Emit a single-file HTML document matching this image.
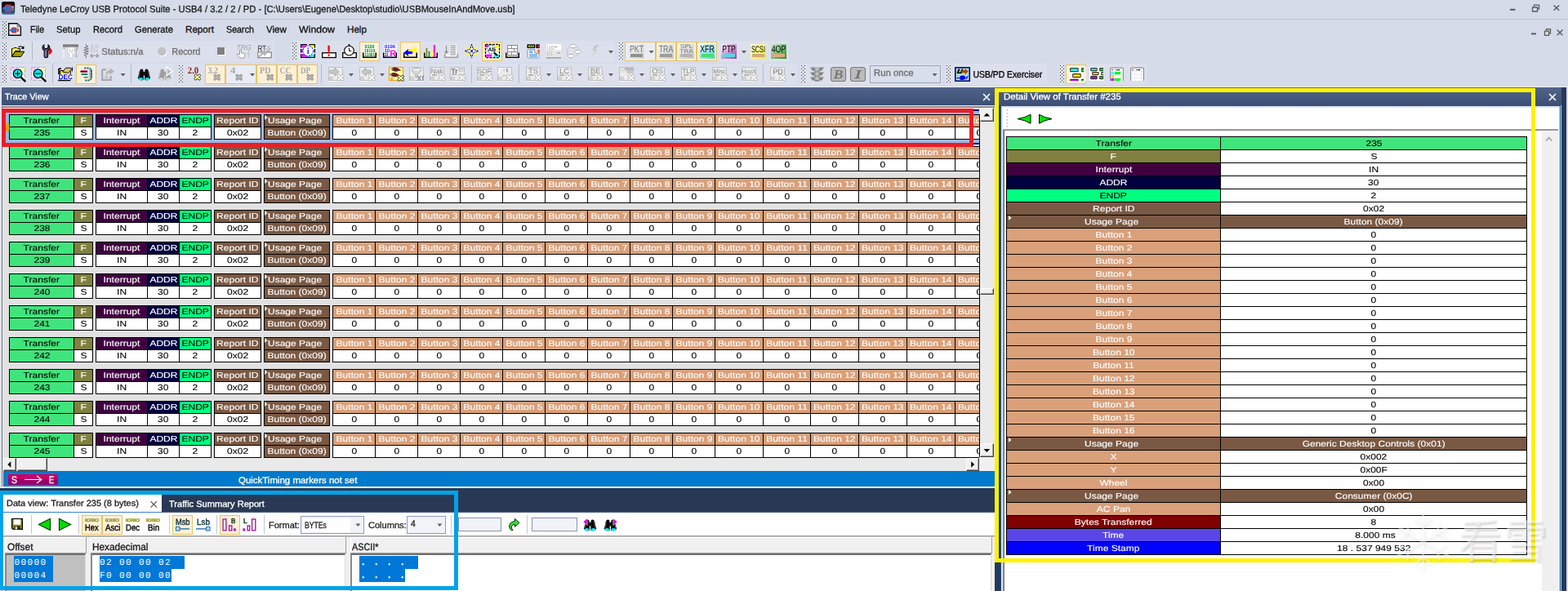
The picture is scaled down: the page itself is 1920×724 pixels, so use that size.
<!DOCTYPE html>
<html lang="en"><head><meta charset="utf-8"><title>Teledyne LeCroy USB Protocol Suite</title>
<style>
*{margin:0;padding:0;}
html,body{width:1920px;height:724px;overflow:hidden;background:#d6dbe9;}
body{position:relative;font-family:"Liberation Sans","Noto Sans CJK SC",sans-serif;text-rendering:geometricPrecision;}
div,svg{position:absolute;}
.t{white-space:pre;-webkit-text-stroke:0.3px currentColor;}
.clip{overflow:hidden;}
.rows{left:0;top:0;}
.row{left:7px;height:31px;width:1300px;}
.cell{top:0;height:31px;box-sizing:border-box;border:1px solid #000;overflow:hidden;}
.cell .h,.cell .v{left:0;right:0;height:14px;font-size:10.2px;line-height:15px;text-align:center;white-space:nowrap;}
.cell .h{top:0;}
.cell .v{top:15px;box-shadow:0 -1px 0 #000;}
.cell span,.dr span{-webkit-text-stroke:0.12px currentColor;display:inline-block;transform:scaleX(1.18);position:relative;}
.cell span.u,.dr span.u{left:-2px;}
.sb{background:#f0f0f0;box-sizing:border-box;border:1px solid;border-color:#fff #404040 #404040 #fff;box-shadow:inset -1px -1px 0 #a0a0a0;}
.dt{width:638px;height:513px;background:#000;}
.dr{left:0;width:638px;height:17px;}
.dl,.dv{top:1px;height:15px;font-size:10.2px;line-height:17px;text-align:center;white-space:nowrap;}
.dl{left:1px;width:261px;}
.dv{left:263px;width:374px;}
.wm{font-family:"Noto Sans CJK SC","Liberation Sans",sans-serif;font-size:57px;line-height:66px;color:rgba(255,255,255,.5);text-shadow:1px 2px 3px rgba(0,0,0,.18);letter-spacing:2px;font-weight:400;white-space:nowrap;transform:scaleX(0.94);transform-origin:0 0;}
</style></head>
<body>
<div class="t" style="left:25.30px;top:4px;font-size:11.63px;line-height:16px;height:16px;color:#1a1a1a;transform:scaleX(0.9661);transform-origin:0 50%;">Teledyne LeCroy USB Protocol Suite - USB4 / 3.2 / 2 / PD - [C:\Users\Eugene\Desktop\studio\USBMouseInAndMove.usb]</div>
<div style="left:0px;top:23px;width:1920px;height:1px;background:#bcc2d2;"></div>
<svg style="left:2px;top:2px;" width="17" height="17" viewBox="0 0 17 17"><defs><linearGradient id="ai" x1="0" y1="0" x2="0" y2="1"><stop offset="0" stop-color="#050505"/><stop offset="0.5" stop-color="#15202c"/><stop offset="1" stop-color="#3b74ad"/></linearGradient></defs><rect x="0" y="0" width="16.2" height="15.8" rx="2.4" fill="url(#ai)"/><path d="M1.1 7.6 L3 6.4 L5.4 3.4 H11 L12.2 5 V11.4 L11 12.9 H5.4 L3 10 L1.1 9 Z" fill="#e82a30"/><path d="M1.1 8 L3.4 7.4 L5.6 5.4 H10.6 V11.4 H5.6 L3.4 9.6 L1.1 9 Z" fill="#1878e0"/><rect x="12.3" y="5.4" width="2.6" height="2.4" fill="#d0d0d0"/><rect x="12.3" y="8.4" width="2.6" height="2.4" fill="#a8a8a8"/><rect x="12.9" y="6.4" width="1.3" height="1" fill="#444"/><rect x="12.9" y="9.2" width="1.3" height="1" fill="#444"/></svg>
<svg style="left:1846px;top:4px;" width="70" height="14" viewBox="0 0 70 14"><rect x="3" y="6.8" width="6.4" height="2" fill="#5a5a5a"/><path d="M30.5 5 h6 v5 h-6 z" fill="none" stroke="#5a5a5a" stroke-width="1.3"/><path d="M32.5 4.6 v-2.4 h6 v5 h-1.6" fill="none" stroke="#5a5a5a" stroke-width="1.3"/><path d="M56.6 2.4 l6.6 6.4 M63.2 2.4 l-6.6 6.4" stroke="#5a5a5a" stroke-width="1.4" fill="none"/></svg>
<svg style="left:0;top:24px" width="12" height="24" viewBox="0 24 12 24"><g fill="#3c3c3c"><rect x="3" y="26" width="1" height="1"/><rect x="7" y="26" width="1" height="1"/><rect x="5" y="28" width="1" height="1"/><rect x="3" y="30" width="1" height="1"/><rect x="7" y="30" width="1" height="1"/><rect x="5" y="32" width="1" height="1"/><rect x="3" y="34" width="1" height="1"/><rect x="7" y="34" width="1" height="1"/><rect x="5" y="36" width="1" height="1"/><rect x="3" y="38" width="1" height="1"/><rect x="7" y="38" width="1" height="1"/><rect x="5" y="40" width="1" height="1"/><rect x="3" y="42" width="1" height="1"/><rect x="7" y="42" width="1" height="1"/><rect x="5" y="44" width="1" height="1"/><rect x="3" y="46" width="1" height="1"/><rect x="7" y="46" width="1" height="1"/></g></svg>
<svg style="left:10px;top:28px;" width="17" height="17" viewBox="0 0 17 17"><path d="M0.7 0.7 H11 L15.4 5 V15.2 H0.7 Z" fill="#f0f0f0" stroke="#0a0a0a" stroke-width="1.4"/><path d="M11 0.9 V5 H15.2 Z" fill="#b8c0d0" stroke="#444" stroke-width="0.6"/><path d="M1.6 8.8 L3 8 L4.8 5.4 H9.4 L10.6 6.6 V11.2 L9.4 12.6 H4.8 L3 10.2 L1.6 9.6 Z" fill="#e82a30"/><path d="M1.6 9 L3.6 8.6 L5.2 7 H9.2 V11.2 H5.2 L3.6 9.8 L1.6 9.4 Z" fill="#1878e0"/><rect x="10.7" y="6.8" width="2.6" height="4.2" fill="#9a9a9a"/><rect x="11.3" y="7.6" width="1.4" height="1" fill="#333"/><rect x="11.3" y="9.4" width="1.4" height="1" fill="#555"/></svg>
<div class="t" style="left:36.50px;top:29px;font-size:11.63px;line-height:16px;height:16px;color:#111;transform:scaleX(0.9079);transform-origin:0 50%;">File</div>
<div class="t" style="left:69.00px;top:29px;font-size:11.63px;line-height:16px;height:16px;color:#111;transform:scaleX(0.9719);transform-origin:0 50%;">Setup</div>
<div class="t" style="left:114.00px;top:29px;font-size:11.63px;line-height:16px;height:16px;color:#111;transform:scaleX(0.9613);transform-origin:0 50%;">Record</div>
<div class="t" style="left:165.00px;top:29px;font-size:11.63px;line-height:16px;height:16px;color:#111;transform:scaleX(0.9691);transform-origin:0 50%;">Generate</div>
<div class="t" style="left:227.00px;top:29px;font-size:11.63px;line-height:16px;height:16px;color:#111;">Report</div>
<div class="t" style="left:277.00px;top:29px;font-size:11.63px;line-height:16px;height:16px;color:#111;transform:scaleX(0.9222);transform-origin:0 50%;">Search</div>
<div class="t" style="left:326.00px;top:29px;font-size:11.63px;line-height:16px;height:16px;color:#111;transform:scaleX(0.9952);transform-origin:0 50%;">View</div>
<div class="t" style="left:366.00px;top:29px;font-size:11.63px;line-height:16px;height:16px;color:#111;transform:scaleX(1.0627);transform-origin:0 50%;">Window</div>
<div class="t" style="left:425.00px;top:29px;font-size:11.63px;line-height:16px;height:16px;color:#111;">Help</div>
<svg style="left:1870px;top:34px;" width="46" height="12" viewBox="0 0 46 12"><rect x="5" y="6.4" width="6" height="2" fill="#5a5a5a"/><path d="M21.5 4.2 h5 v5.2 h-5 z" fill="none" stroke="#5a5a5a" stroke-width="1.3"/><path d="M23.5 3.8 v-2.2 h5 v5.2 h-1.6" fill="none" stroke="#5a5a5a" stroke-width="1.3"/><path d="M36.6 2.6 l6.8 6.6 M43.4 2.6 l-6.8 6.6" stroke="#5a5a5a" stroke-width="1.4" fill="none"/></svg>
<svg style="left:0;top:48px;will-change:transform" width="1920" height="58" viewBox="0 48 1920 58"><rect x="2" y="50" width="334.5" height="26" rx="2" fill="#dde2ee" opacity="0.75"/><rect x="356.5" y="50" width="396.5" height="26" rx="2" fill="#dde2ee" opacity="0.75"/><rect x="756" y="50" width="210" height="26" rx="2" fill="#dde2ee" opacity="0.75"/><g fill="#3c3c3c"><rect x="3" y="52" width="1" height="1"/><rect x="7" y="52" width="1" height="1"/><rect x="5" y="54" width="1" height="1"/><rect x="3" y="56" width="1" height="1"/><rect x="7" y="56" width="1" height="1"/><rect x="5" y="58" width="1" height="1"/><rect x="3" y="60" width="1" height="1"/><rect x="7" y="60" width="1" height="1"/><rect x="5" y="62" width="1" height="1"/><rect x="3" y="64" width="1" height="1"/><rect x="7" y="64" width="1" height="1"/><rect x="5" y="66" width="1" height="1"/><rect x="3" y="68" width="1" height="1"/><rect x="7" y="68" width="1" height="1"/><rect x="5" y="70" width="1" height="1"/><rect x="3" y="72" width="1" height="1"/><rect x="7" y="72" width="1" height="1"/></g><g transform="translate(14,55)"><path d="M1.2 15.2 L5.4 9.4 H16.6 L12.6 15.2 Z" fill="#fff" opacity="0.9"/><path d="M0.6 14.4 V4.6 H2 L3 3.6 H6.4 L7.4 4.6 H10.4 V7.4 H4.6 Z" fill="#ffff40" stroke="#000" stroke-width="1"/><path d="M0.6 14.4 L4.6 8.2 H15.8 L11.8 14.4 Z" fill="#a0a000" stroke="#000" stroke-width="1"/><path d="M8.6 3 Q11.4 0.2 14 3.4" fill="none" stroke="#000" stroke-width="1.1"/><path d="M15.4 1 V5 H11.6 Z" fill="#000"/></g><rect x="39.0" y="51" width="1" height="23" fill="#b3b8c6"/><g transform="translate(51,54)"><path d="M8.6 4.8 A4.4 4.4 0 0 1 8.6 13.6 Z" fill="#ff0000"/><path d="M8.6 13.8 Q12 12.6 13 9.6" stroke="#fff" stroke-width="1" fill="none"/><path d="M2.8 1 V4.2 L4.4 5.6 H6.4 L8 4.2 V1 Q10.2 2.4 9.8 5 Q9.2 7 7.6 7.8 V15.2 Q7.4 16.8 5.4 16.8 Q3.4 16.8 3.2 15.2 V7.8 Q1.6 7 1 5 Q0.6 2.4 2.8 1 Z" fill="#5c5c84" stroke="#000" stroke-width="1.1"/><path d="M4.6 8.6 V14.6" stroke="#a0a0c8" stroke-width="0.9"/></g><g transform="translate(77,54)"><rect x="0" y="0.3" width="19" height="3.4" fill="#7d7d7d"/><path d="M0 4.5 H3 V6 H0 Z M16 4.5 H19 V6 H16 Z" fill="#b8b8b8"/><path d="M6 4 H14 V12 H12 V17 H8 V12 H6 Z" fill="#fff" stroke="#c8c8c8" stroke-width="0.8"/><path d="M8.6 6 V10 H11.4 V6" fill="none" stroke="#c0c0c0" stroke-width="1"/><rect x="0" y="6" width="1.6" height="11" fill="#f0f0f0"/><path d="M16.5 6 V16 M14.6 8 L16.5 5.8 L18.4 8 M14.6 14 L16.5 16.2 L18.4 14" fill="none" stroke="#b0b0b0" stroke-width="1"/></g><g transform="translate(102,54)" fill="none"><path d="M3.5 0 V2 L6 3 L1 4.5 L6.5 6 L0.5 7.5 L6.5 9 L0.5 10.5 L6 12 L1 13.5 L3.5 14.5 V17" stroke="#787878" stroke-width="1"/><text x="8.6" y="4.8" font-family="Liberation Sans, sans-serif" font-size="6.6" fill="#b8b8b8" stroke="none" textLength="10.4" lengthAdjust="spacingAndGlyphs">3.0</text><text x="8.6" y="10.4" font-family="Liberation Sans, sans-serif" font-size="6.6" fill="#b8b8b8" stroke="none" textLength="10" lengthAdjust="spacingAndGlyphs">Rx</text><path d="M9 14.3 H18.4 M11.2 12.1 L9 14.3 L11.2 16.5 M16.2 12.1 L18.4 14.3 L16.2 16.5" stroke="#909090" stroke-width="1.1"/></g><text x="124.3" y="66.6" font-family="Liberation Sans, sans-serif" font-size="11.5" fill="#6d6d6d" stroke="#6d6d6d" stroke-width="0.3" textLength="51.4" lengthAdjust="spacingAndGlyphs">Status:n/a</text><circle cx="199.2" cy="64" r="5.2" fill="#fff"/><circle cx="198.4" cy="63" r="5.2" fill="#c2c2c2"/><text x="210.3" y="66.6" font-family="Liberation Sans, sans-serif" font-size="11.5" fill="#6d6d6d" stroke="#6d6d6d" stroke-width="0.3" textLength="35" lengthAdjust="spacingAndGlyphs">Record</text><rect x="267" y="59" width="9" height="9" fill="#fff"/><rect x="266" y="58" width="9" height="9" fill="#808080"/><g transform="translate(289,54)"><text x="0.4" y="6.8" font-family="Liberation Sans, sans-serif" font-size="8.6" font-style="italic" fill="#a4a4a4" textLength="18.4" lengthAdjust="spacingAndGlyphs">TRG</text><path d="M15.5 7 V17 M13 11.5 H15.5 M15.5 13 L17.5 11.5" stroke="#c4c4c4" stroke-width="1" fill="none"/><path d="M4.5 7.5 V13 L2 11.5 L1 12.5 L4.5 17 H10 L11 12.5 L8 11 H6.5 V7.5 Q5.5 6.5 4.5 7.5 Z" fill="#fff" stroke="#909090" stroke-width="0.9"/></g><g transform="translate(315,54)"><rect x="0.7" y="10" width="16.6" height="6.6" fill="#fff" stroke="#8a8a8a" stroke-width="1.3"/><text x="0.4" y="8.8" font-family="Liberation Sans, sans-serif" font-size="10.6" fill="#303030" textLength="10.6" lengthAdjust="spacingAndGlyphs">RT</text><path d="M2 15.5 L7 11 L9 13 L16 5" stroke="#b4b4b4" stroke-width="2" fill="none"/><path d="M8 8.5 L16 1.5" stroke="#c8c8c8" stroke-width="2" fill="none"/></g><g fill="#3c3c3c"><rect x="358" y="52" width="1" height="1"/><rect x="362" y="52" width="1" height="1"/><rect x="360" y="54" width="1" height="1"/><rect x="358" y="56" width="1" height="1"/><rect x="362" y="56" width="1" height="1"/><rect x="360" y="58" width="1" height="1"/><rect x="358" y="60" width="1" height="1"/><rect x="362" y="60" width="1" height="1"/><rect x="360" y="62" width="1" height="1"/><rect x="358" y="64" width="1" height="1"/><rect x="362" y="64" width="1" height="1"/><rect x="360" y="66" width="1" height="1"/><rect x="358" y="68" width="1" height="1"/><rect x="362" y="68" width="1" height="1"/><rect x="360" y="70" width="1" height="1"/><rect x="358" y="72" width="1" height="1"/><rect x="362" y="72" width="1" height="1"/></g><rect x="440.5" y="51.5" width="24" height="23" fill="#fdf0d4" stroke="#e5c365" stroke-width="1"/><rect x="490.5" y="51.5" width="24" height="23" fill="#fdf0d4" stroke="#e5c365" stroke-width="1"/><rect x="590.5" y="51.5" width="24" height="23" fill="#fdf0d4" stroke="#e5c365" stroke-width="1"/><g transform="translate(368,54)"><rect x="0.7" y="0.7" width="16.6" height="15.6" fill="#fff" stroke="#000" stroke-width="1.4"/><rect x="1.4" y="1.4" width="6" height="4" fill="#ff00ff"/><rect x="10.6" y="1.4" width="6" height="3" fill="#ffff00"/><rect x="1.4" y="12" width="6" height="3.6" fill="#ff00ff"/><rect x="11" y="12.6" width="5.6" height="3" fill="#00ffff"/><rect x="1.4" y="6" width="2" height="4.5" fill="#ff00ff"/><rect x="0" y="4.6" width="18" height="1.4" fill="#fff"/><rect x="0" y="10.6" width="18" height="1.4" fill="#fff"/><rect x="8" y="0" width="2" height="2" fill="#fff"/><circle cx="9.2" cy="8.4" r="6.3" fill="#fff" stroke="#0000ff" stroke-width="1" stroke-dasharray="2.2 1.2"/><rect x="8.6" y="6.8" width="1.3" height="5.4" fill="#0000ff"/><rect x="8.6" y="4.4" width="1.3" height="1.4" fill="#0000ff"/></g><rect x="394.7" y="64.7" width="16.6" height="5.8" fill="#fff" stroke="#000" stroke-width="1.3"/><path d="M401.4 55.8 h2.4 v5.5 l-0.6 4 h-1.2 l-0.6 -4 z" fill="#ff0000"/><ellipse cx="402.6" cy="67.6" rx="1.1" ry="1.4" fill="#ff0000"/><rect x="419.7" y="64.7" width="16.6" height="5.8" fill="#fff" stroke="#000" stroke-width="1.3"/><circle cx="427.5" cy="62" r="5.8" fill="#fff" stroke="#000" stroke-width="1.1"/><path d="M427.5 58.5 V62.4 H430.3" stroke="#000" stroke-width="1" fill="none"/><path d="M426.2 54.8 H428.8 M427.5 54.8 V56" stroke="#000" stroke-width="1"/><rect x="445.5" y="54" width="15" height="16" fill="#fff"/><path d="M444.75 64.5 V70.25 H460.25 V64.5" fill="none" stroke="#000" stroke-width="1.5"/><text x="452.6" y="59.3" font-family="Liberation Sans, sans-serif" font-size="6.2" font-weight="700" fill="#008000" text-anchor="middle" textLength="12" lengthAdjust="spacingAndGlyphs">0100</text><text x="452.6" y="64.3" font-family="Liberation Sans, sans-serif" font-size="6.2" font-weight="700" fill="#008000" text-anchor="middle" textLength="13" lengthAdjust="spacingAndGlyphs">10110</text><text x="452.6" y="69.3" font-family="Liberation Sans, sans-serif" font-size="6.2" font-weight="700" fill="#008000" text-anchor="middle" textLength="13" lengthAdjust="spacingAndGlyphs">11001</text><rect x="470.5" y="54" width="15" height="16" fill="#fff"/><path d="M469.75 64.5 V70.25 H485.25 V64.5" fill="none" stroke="#000" stroke-width="1.5"/><text x="471" y="59.3" font-family="Liberation Sans, sans-serif" font-size="6.2" font-weight="700" fill="#0000ff" textLength="13" lengthAdjust="spacingAndGlyphs">0100</text><text x="471" y="64.3" font-family="Liberation Sans, sans-serif" font-size="6.2" font-weight="700" fill="#0000ff" textLength="6" lengthAdjust="spacingAndGlyphs">10</text><text x="471" y="69.3" font-family="Liberation Sans, sans-serif" font-size="6.2" font-weight="700" fill="#0000ff" textLength="5" lengthAdjust="spacingAndGlyphs">11</text><text x="477.3" y="69.4" font-family="Liberation Sans, sans-serif" font-size="11" font-weight="700" fill="#ff00ff">R</text><path d="M494.75 64.5 V70.25 H510.25 V64.5" fill="#fdeccc" stroke="#000" stroke-width="1.5"/><path d="M500.5 60 H506 V56.5 L511.5 61 L506 65.5 V62.5 H500.5 Z" fill="#ffff00"/><path d="M505 63 H500 V60 L494.5 64.5 L500 69 V66 H505 Z" fill="#0000ff"/><path d="M519.75 64.5 V70.25 H535.25 V64.5" fill="#fff" stroke="#000" stroke-width="1.5"/><rect x="521.6" y="59" width="1.8" height="11" fill="#808000"/><rect x="524.6" y="63" width="1.8" height="7" fill="#008080"/><rect x="527.6" y="60" width="2" height="10" fill="#ffff00"/><rect x="530.8" y="55" width="2" height="15" fill="#ff00ff"/><path d="M544.75 66 V70.25 H560.25 V66" fill="#f4f4f4" stroke="#9a9a9a" stroke-width="1.5"/><rect x="550.5" y="54.5" width="8.5" height="14.5" fill="#fff"/><rect x="551.3" y="55.3" width="6.8" height="1.3" fill="#a0a0a0"/><rect x="551.3" y="57.5" width="6.8" height="1.3" fill="#a0a0a0"/><rect x="551.3" y="59.699999999999996" width="6.8" height="1.3" fill="#a0a0a0"/><rect x="551.3" y="61.9" width="6.8" height="1.3" fill="#a0a0a0"/><rect x="551.3" y="64.1" width="6.8" height="1.3" fill="#a0a0a0"/><rect x="551.3" y="66.3" width="6.8" height="1.3" fill="#a0a0a0"/><path d="M546.5 56 V65 M544.6 62.6 L546.5 65.2 L548.4 62.6" stroke="#8c8c8c" stroke-width="1.1" fill="none"/><g transform="translate(569,54)"><path d="M1.5 2.5 L6 5 L4 8 Z M15.5 2.5 L11 5 L13 8 Z M1.5 14.5 L6 12 L4 9 Z M15.5 14.5 L11 12 L13 9 Z" fill="#ffff00"/><path d="M8.5 0.3 L10.4 6.4 L16.8 8.5 L10.4 10.6 L8.5 16.7 L6.6 10.6 L0.2 8.5 L6.6 6.4 Z" fill="#fff" stroke="#000" stroke-width="1" stroke-dasharray="2 0.8"/><rect x="7.3" y="7.3" width="2.6" height="2.6" fill="#0000ff"/></g><g transform="translate(594,54)"><rect x="0.5" y="0.5" width="17" height="16" fill="#fff" stroke="#000" stroke-width="1.3" stroke-dasharray="3 1.2"/><rect x="1.2" y="1.2" width="4" height="3" fill="#ff00ff"/><rect x="12" y="1.2" width="5" height="4" fill="#ffff00"/><rect x="1.2" y="12.5" width="7" height="3" fill="#ff00ff"/><rect x="11" y="12.5" width="6" height="3" fill="#00ffff"/><rect x="11.5" y="7" width="5.5" height="3" fill="#ffe8b0"/><circle cx="7.4" cy="6.6" r="5" fill="#fff" stroke="#008080" stroke-width="1" stroke-dasharray="2 1"/><text x="3.4" y="9.3" font-family="Liberation Sans, sans-serif" font-size="7" font-weight="700" fill="#000">Ab</text><path d="M11 10.5 L15 14" stroke="#000" stroke-width="2.2"/></g><path d="M619.75 64.5 V70.25 H635.25 V64.5" fill="#fff" stroke="#000" stroke-width="1.5"/><g fill="none" stroke="#8c8c8c" stroke-width="1"><rect x="621.5" y="55.5" width="12" height="12" fill="#fff"/><path d="M621.5 59.5 H633.5 M621.5 63.5 H633.5 M626.5 55.5 V59.5 M629.5 59.5 V63.5 M626.5 63.5 V67.5"/><path d="M621.5 68 l1.5 1.3 l1.5 -1.3 l1.5 1.3 l1.5 -1.3 l1.5 1.3 l1.5 -1.3 l1.5 1.3 l1.5 -1.3" stroke="#b0b0b0"/></g><g transform="translate(645,54)"><rect x="0.5" y="0.3" width="9.8" height="4.6" fill="#000"/><rect x="2" y="1.6" width="6.8" height="2" fill="#c8f000"/><rect x="4" y="2.2" width="1" height="0.9" fill="#000"/><rect x="6" y="2.2" width="1" height="0.9" fill="#000"/><rect x="11.4" y="0.3" width="4.2" height="4.6" fill="#000"/><rect x="13" y="1.4" width="1.8" height="2.4" fill="#ff2050"/><path d="M2.5 6.5 H9.5 V9 Q9.5 11.5 12 11.5 H15 V15.5 Q15 17 13.5 17 H2.5 Q1 17 1 15.5 V8 Q1 6.5 2.5 6.5 Z" fill="#fff" stroke="#8888c8" stroke-width="1"/><path d="M3 8.6 H7.4 M3 10.6 H7.4 M3 13 H13 M3 15 H13" stroke="#2080d0" stroke-width="1"/><path d="M14.6 5.6 L15.3 8 L16.6 8.7 L15.3 9.4 L14.6 12.4 L13.9 9.4 L12.6 8.7 L13.9 8 Z" fill="#ff4000"/></g><g transform="translate(669,54)"><rect x="0" y="0" width="18" height="7.5" fill="#fff"/><rect x="0" y="7.5" width="18" height="8.5" fill="#e6e6e6"/><rect x="0" y="16" width="18" height="1.6" fill="#a0a0a0"/><text x="0.8" y="6.8" font-family="Liberation Sans, sans-serif" font-size="7.5" fill="#a8a8a8" textLength="8.5" lengthAdjust="spacingAndGlyphs">U0</text><text x="0.8" y="14.4" font-family="Liberation Sans, sans-serif" font-size="7.5" fill="#b0b0b0" textLength="7" lengthAdjust="spacingAndGlyphs">U1</text><rect x="9.8" y="2.6" width="3.4" height="1.6" fill="#b4b4b4"/><rect x="13" y="10" width="4" height="1.8" fill="#b0b0b0"/></g><g transform="translate(694,54)" stroke="#a8a8a8" stroke-width="0.9" fill="#fff"><path d="M0.8 6.5 L2.5 4.5 M0.8 6.5 V13 L2 14.5" fill="none" stroke="#b8b8b8"/><path d="M3.5 2.6 L5.5 0.6 H9.8 L11.8 2.6 L9.8 4.6 H5.5 Z"/><path d="M9.5 9.4 L11.5 7.4 H15.8 L17.8 9.4 L15.8 11.4 H11.5 Z"/><path d="M1 14.6 L3 12.6 H7.3 L9.3 14.6 L7.3 16.6 H3 Z"/><path d="M12.5 3.2 L14.8 5.6 M13.8 12.6 L11 14.8" stroke="#d0d0d0" stroke-width="1.6" fill="none"/></g><path d="M733.8 55 L728.2 55.6 L725.2 62 L729.2 61.6 L723.6 70.6 L731.6 60.4 L728.2 60.4 Z" fill="#c4c4c4"/><path d="M745 62 h6 l-3 3.4 z" fill="#5e5e5e"/><g fill="#3c3c3c"><rect x="758" y="52" width="1" height="1"/><rect x="762" y="52" width="1" height="1"/><rect x="760" y="54" width="1" height="1"/><rect x="758" y="56" width="1" height="1"/><rect x="762" y="56" width="1" height="1"/><rect x="760" y="58" width="1" height="1"/><rect x="758" y="60" width="1" height="1"/><rect x="762" y="60" width="1" height="1"/><rect x="760" y="62" width="1" height="1"/><rect x="758" y="64" width="1" height="1"/><rect x="762" y="64" width="1" height="1"/><rect x="760" y="66" width="1" height="1"/><rect x="758" y="68" width="1" height="1"/><rect x="762" y="68" width="1" height="1"/><rect x="760" y="70" width="1" height="1"/><rect x="758" y="72" width="1" height="1"/><rect x="762" y="72" width="1" height="1"/></g><rect x="765.5" y="51.5" width="37" height="23" fill="#e9edf3" stroke="#e5c365" stroke-width="1"/><rect x="803.5" y="51.5" width="24" height="23" fill="#fdf0d4" stroke="#e5c365" stroke-width="1"/><rect x="828.5" y="51.5" width="24" height="23" fill="#fdf0d4" stroke="#e5c365" stroke-width="1"/><rect x="853.5" y="51.5" width="24" height="23" fill="#fdf0d4" stroke="#e5c365" stroke-width="1"/><defs><linearGradient id="g770" x1="0" y1="0" x2="1" y2="1"><stop offset="0" stop-color="#f4f4f4"/><stop offset="1" stop-color="#d4d4d4"/></linearGradient></defs><rect x="770" y="54" width="19" height="18" fill="url(#g770)"/><text x="779.5" y="64.4" font-family="Liberation Sans, sans-serif" font-size="12" fill="#707070" text-anchor="middle" textLength="17" lengthAdjust="spacingAndGlyphs">PKT</text><rect x="772" y="66" width="15" height="4" fill="#909090"/><path d="M794.6 62 h6 l-3 3.4 z" fill="#5e5e5e"/><defs><linearGradient id="g806" x1="0" y1="0" x2="1" y2="1"><stop offset="0" stop-color="#f6f6f6"/><stop offset="1" stop-color="#c8c8c8"/></linearGradient></defs><rect x="806" y="54" width="19" height="18" fill="url(#g806)"/><text x="815.5" y="64.4" font-family="Liberation Sans, sans-serif" font-size="12" fill="#707070" text-anchor="middle" textLength="17.5" lengthAdjust="spacingAndGlyphs">TRA</text><rect x="808" y="66" width="15" height="4" fill="#9c9c9c"/><defs><linearGradient id="g831" x1="0" y1="0" x2="1" y2="1"><stop offset="0" stop-color="#f6f6f6"/><stop offset="1" stop-color="#c8c8c8"/></linearGradient></defs><rect x="831" y="54" width="19" height="18" fill="url(#g831)"/><text x="840.5" y="59.4" font-family="Liberation Sans, sans-serif" font-size="7" fill="#707070" text-anchor="middle" textLength="15.6" lengthAdjust="spacingAndGlyphs">SPL</text><text x="840.5" y="64.8" font-family="Liberation Sans, sans-serif" font-size="7" fill="#707070" text-anchor="middle" textLength="16.4" lengthAdjust="spacingAndGlyphs">TRA</text><rect x="833" y="66" width="15" height="4" fill="#b4b4b4"/><defs><linearGradient id="g856" x1="0" y1="0" x2="1" y2="1"><stop offset="0" stop-color="#e0ffff"/><stop offset="1" stop-color="#60c8d8"/></linearGradient></defs><rect x="856.5" y="54" width="19" height="18" fill="url(#g856)"/><text x="866.0" y="64.4" font-family="Liberation Sans, sans-serif" font-size="12" fill="#000" text-anchor="middle" textLength="17.5" lengthAdjust="spacingAndGlyphs">XFR</text><rect x="858.5" y="66" width="15" height="4" fill="#40e070"/><defs><linearGradient id="g883" x1="0" y1="0" x2="1" y2="1"><stop offset="0" stop-color="#fff0ff"/><stop offset="1" stop-color="#a040a0"/></linearGradient></defs><rect x="883" y="54" width="19" height="18" fill="url(#g883)"/><text x="892.5" y="64.4" font-family="Liberation Sans, sans-serif" font-size="12" fill="#000" text-anchor="middle" textLength="16.5" lengthAdjust="spacingAndGlyphs">PTP</text><rect x="885" y="66" width="15" height="4" fill="#60d4e4"/><path d="M908 62 h6 l-3 3.4 z" fill="#5e5e5e"/><defs><linearGradient id="g919" x1="0" y1="0" x2="1" y2="1"><stop offset="0" stop-color="#ffffd0"/><stop offset="1" stop-color="#f0e840"/></linearGradient></defs><rect x="919" y="54" width="19" height="18" fill="url(#g919)"/><text x="928.5" y="64.4" font-family="Liberation Sans, sans-serif" font-size="11" fill="#000" text-anchor="middle" textLength="17" lengthAdjust="spacingAndGlyphs">SCSI</text><rect x="921" y="66" width="15" height="4" fill="#d0aa78"/><defs><linearGradient id="g944" x1="0" y1="0" x2="1" y2="1"><stop offset="0" stop-color="#d0f0d0"/><stop offset="1" stop-color="#209020"/></linearGradient></defs><rect x="944" y="54" width="19" height="18" fill="url(#g944)"/><text x="953.5" y="64.4" font-family="Liberation Sans, sans-serif" font-size="12" fill="#000" text-anchor="middle" textLength="17.5" lengthAdjust="spacingAndGlyphs">4OP</text><rect x="946" y="66" width="15" height="4" fill="#e0a880"/><rect x="2" y="78" width="212" height="26" rx="2" fill="#dde2ee" opacity="0.75"/><rect x="216.7" y="78" width="759.5999999999999" height="26" rx="2" fill="#dde2ee" opacity="0.75"/><rect x="979" y="78" width="175" height="26" rx="2" fill="#dde2ee" opacity="0.75"/><rect x="1157" y="78" width="125" height="26" rx="2" fill="#dde2ee" opacity="0.75"/><rect x="1296.7" y="78" width="108.29999999999995" height="26" rx="2" fill="#dde2ee" opacity="0.75"/><g fill="#3c3c3c"><rect x="3" y="80" width="1" height="1"/><rect x="7" y="80" width="1" height="1"/><rect x="5" y="82" width="1" height="1"/><rect x="3" y="84" width="1" height="1"/><rect x="7" y="84" width="1" height="1"/><rect x="5" y="86" width="1" height="1"/><rect x="3" y="88" width="1" height="1"/><rect x="7" y="88" width="1" height="1"/><rect x="5" y="90" width="1" height="1"/><rect x="3" y="92" width="1" height="1"/><rect x="7" y="92" width="1" height="1"/><rect x="5" y="94" width="1" height="1"/><rect x="3" y="96" width="1" height="1"/><rect x="7" y="96" width="1" height="1"/><rect x="5" y="98" width="1" height="1"/><rect x="3" y="100" width="1" height="1"/><rect x="7" y="100" width="1" height="1"/></g><g transform="translate(13,82)"><rect x="0.5" y="0.5" width="17" height="16" fill="#fff" stroke="#b4b4b4" stroke-width="1" stroke-dasharray="5 1.2"/><rect x="1.2" y="1.2" width="7" height="4.4" fill="#ffc0ff"/><rect x="12" y="1.2" width="5" height="3.4" fill="#ffffa0"/><rect x="1.2" y="12.4" width="7" height="3.4" fill="#ffc0ff"/><rect x="13" y="6.8" width="4" height="3.4" fill="#d0ffd0"/><rect x="11" y="12.6" width="3" height="3" fill="#c0ffff"/><path d="M12 12 L17.6 17.4" stroke="#000" stroke-width="2.4" stroke-linecap="round"/><circle cx="8.6" cy="8.2" r="5.3" fill="#00f0f0" stroke="#000" stroke-width="1.3"/><path d="M5.4 8.2 H11.8 M8.6 5 V11.4" stroke="#000" stroke-width="1.2"/></g><g transform="translate(38,82)"><rect x="0.5" y="0.5" width="17" height="16" fill="#fff" stroke="#b4b4b4" stroke-width="1" stroke-dasharray="5 1.2"/><rect x="1.2" y="1.2" width="7" height="4.4" fill="#ffc0ff"/><rect x="12" y="1.2" width="5" height="3.4" fill="#ffffa0"/><rect x="1.2" y="12.4" width="7" height="3.4" fill="#ffc0ff"/><rect x="13" y="6.8" width="4" height="3.4" fill="#d0ffd0"/><rect x="11" y="12.6" width="3" height="3" fill="#c0ffff"/><path d="M12 12 L17.6 17.4" stroke="#000" stroke-width="2.4" stroke-linecap="round"/><circle cx="8.6" cy="8.2" r="5.3" fill="#00f0f0" stroke="#000" stroke-width="1.3"/><path d="M5.4 8.2 H11.8" stroke="#000" stroke-width="1.2"/></g><rect x="64.0" y="79" width="1" height="23" fill="#b3b8c6"/><g transform="translate(71,82)"><path d="M1 2 H4 M1 2 V16.5 H15" fill="none" stroke="#000" stroke-width="1.6"/><rect x="2.8" y="4.5" width="12.5" height="11.5" fill="#ffff00" stroke="#000" stroke-width="1"/><path d="M5.5 6 L9.5 1.2 H15.5 L16.5 3.8 L12.4 7.4 Z" fill="#e0c080" stroke="#000" stroke-width="0.9"/><path d="M16.8 0.5 L18 0.5 V6 L16.8 4 Z" fill="#000080"/><rect x="0" y="9" width="18.6" height="6.6" fill="#fff"/><text x="0.4" y="15.2" font-family="Liberation Sans, sans-serif" font-size="8.2" font-weight="700" fill="#0000ff" textLength="17.8" lengthAdjust="spacingAndGlyphs">DEC</text></g><rect x="93.5" y="79.5" width="24" height="23" fill="#fdf0d4" stroke="#e5c365" stroke-width="1"/><g transform="translate(98,82)"><path d="M5 1.5 H10 Q13.5 1.5 13.5 5 V13 Q13.5 16.5 10 16.5 H6" fill="none" stroke="#208090" stroke-width="2" stroke-dasharray="2.4 0.8"/><path d="M11.4 3 V15" stroke="#c0c0c0" stroke-width="1.4"/><path d="M14 3 V14" stroke="#0000a0" stroke-width="0.8"/><rect x="0.5" y="4.8" width="8.6" height="1.8" fill="#000"/><rect x="1" y="4.2" width="8" height="0.8" fill="#ff00a0"/><rect x="1.6" y="8" width="7.6" height="2" fill="#008080"/><rect x="4.6" y="12" width="5" height="1.4" fill="#008080"/></g><g transform="translate(124,82)"><path d="M1.2 3.2 H6 M1.2 3.2 V16 H11.6 V11" fill="none" stroke="#a4a4a4" stroke-width="2"/><path d="M5.6 8 Q5.6 4.2 10.4 4.2 V1.2 L16 5.6 L10.4 10 V7.2 Q7.6 7.2 7.2 9.4 Z" fill="#b4b4b4"/><text x="3.2" y="14.8" font-family="Liberation Sans, sans-serif" font-size="9.6" font-weight="700" fill="#a8a8a8" stroke="#e0e0e0" stroke-width="0.4">4</text></g><path d="M147.6 90 h6 l-3 3.4 z" fill="#5e5e5e"/><rect x="160.0" y="79" width="1" height="23" fill="#b3b8c6"/><g transform="translate(168.7,84)"><path d="M0 12 L2.5 2.5 Q3 0.5 4.8 0.5 Q6.6 0.5 6.8 2.5 L7.2 13.5 Q3.5 16 0 12 Z" fill="#0a0a0a"/><path d="M15.5 12 L13 2.5 Q12.5 0.5 10.7 0.5 Q8.9 0.5 8.7 2.5 L8.3 13.5 Q12 16 15.5 12 Z" fill="#0a0a0a"/><rect x="6.5" y="4" width="2.5" height="4.5" fill="#0a0a0a"/><path d="M2.6 3 L1.2 11" stroke="#555" stroke-width="1.2"/><path d="M12.9 3 L14.3 11" stroke="#555" stroke-width="1.2"/><ellipse cx="3.7" cy="12.8" rx="2.9" ry="1.7" fill="#00e8f0"/><ellipse cx="11.8" cy="12.8" rx="2.9" ry="1.7" fill="#00e8f0"/></g><g transform="translate(194,84)"><path d="M0 12 L2.5 2.5 Q3 0.5 4.8 0.5 Q6.6 0.5 6.8 2.5 L7.2 13.5 Q3.5 16 0 12 Z" fill="#9c9c9c"/><path d="M15.5 12 L13 2.5 Q12.5 0.5 10.7 0.5 Q8.9 0.5 8.7 2.5 L8.3 13.5 Q12 16 15.5 12 Z" fill="#9c9c9c"/><rect x="6.5" y="4" width="2.5" height="4.5" fill="#9c9c9c"/><path d="M2.6 3 L1.2 11" stroke="#b8b8b8" stroke-width="1.2"/><path d="M12.9 3 L14.3 11" stroke="#b8b8b8" stroke-width="1.2"/><ellipse cx="3.7" cy="12.8" rx="2.9" ry="1.7" fill="#d4d4d4"/><ellipse cx="11.8" cy="12.8" rx="2.9" ry="1.7" fill="#d4d4d4"/></g><path d="M204 82 L210.8 87.5 L204 93 Z" fill="#bcbcbc" stroke="#fff" stroke-width="1.2"/><g fill="#3c3c3c"><rect x="219" y="80" width="1" height="1"/><rect x="223" y="80" width="1" height="1"/><rect x="221" y="82" width="1" height="1"/><rect x="219" y="84" width="1" height="1"/><rect x="223" y="84" width="1" height="1"/><rect x="221" y="86" width="1" height="1"/><rect x="219" y="88" width="1" height="1"/><rect x="223" y="88" width="1" height="1"/><rect x="221" y="90" width="1" height="1"/><rect x="219" y="92" width="1" height="1"/><rect x="223" y="92" width="1" height="1"/><rect x="221" y="94" width="1" height="1"/><rect x="219" y="96" width="1" height="1"/><rect x="223" y="96" width="1" height="1"/><rect x="221" y="98" width="1" height="1"/><rect x="219" y="100" width="1" height="1"/><rect x="223" y="100" width="1" height="1"/></g><text x="229.8" y="90.4" font-family="Liberation Serif, serif" font-size="11.5" font-weight="700" fill="#8c1c0c" textLength="13.4" lengthAdjust="spacingAndGlyphs">2.0</text><g transform="translate(237.4,90.6) scale(1.0)"><path d="M1.9 1.8 L6.7 6 M6.7 1.8 L1.9 6" stroke="#3a3a20" stroke-width="3.5" stroke-linecap="round" fill="none"/><path d="M1.9 1.8 L6.7 6 M6.7 1.8 L1.9 6" stroke="#ffffa0" stroke-width="2" stroke-linecap="round" fill="none"/></g><rect x="251.5" y="79.5" width="24" height="23" fill="#fdf0d4" stroke="#e5c365" stroke-width="1"/><rect x="276.5" y="79.5" width="37" height="23" fill="#e9edf3" stroke="#e5c365" stroke-width="1"/><rect x="314.5" y="79.5" width="24" height="23" fill="#fdf0d4" stroke="#e5c365" stroke-width="1"/><rect x="339.5" y="79.5" width="24" height="23" fill="#fdf0d4" stroke="#e5c365" stroke-width="1"/><rect x="364.5" y="79.5" width="24" height="23" fill="#fdf0d4" stroke="#e5c365" stroke-width="1"/><text x="254.6" y="90.4" font-family="Liberation Serif, serif" font-size="11.5" font-weight="700" fill="#a9a9a9" textLength="12.5" lengthAdjust="spacingAndGlyphs">3.2</text><text x="282" y="90.4" font-family="Liberation Serif, serif" font-size="11.5" font-weight="700" fill="#a9a9a9" textLength="6.5" lengthAdjust="spacingAndGlyphs">4</text><text x="318" y="90.4" font-family="Liberation Serif, serif" font-size="11.5" font-weight="700" fill="#a9a9a9" textLength="13.4" lengthAdjust="spacingAndGlyphs">PD</text><text x="342.6" y="90.4" font-family="Liberation Serif, serif" font-size="11.5" font-weight="700" fill="#a9a9a9" textLength="14" lengthAdjust="spacingAndGlyphs">CC</text><text x="368" y="90.4" font-family="Liberation Serif, serif" font-size="11.5" font-weight="700" fill="#a9a9a9" textLength="12" lengthAdjust="spacingAndGlyphs">DP</text><g transform="translate(261.4,90.8) scale(1.0)"><path d="M1.9 1.8 L6.7 6 M6.7 1.8 L1.9 6" stroke="#858585" stroke-width="3.5" stroke-linecap="round" fill="none"/><path d="M1.9 1.8 L6.7 6 M6.7 1.8 L1.9 6" stroke="#b8b8b8" stroke-width="2" stroke-linecap="round" fill="none"/></g><g transform="translate(288.4,90.8) scale(1.0)"><path d="M1.9 1.8 L6.7 6 M6.7 1.8 L1.9 6" stroke="#858585" stroke-width="3.5" stroke-linecap="round" fill="none"/><path d="M1.9 1.8 L6.7 6 M6.7 1.8 L1.9 6" stroke="#b8b8b8" stroke-width="2" stroke-linecap="round" fill="none"/></g><g transform="translate(326.4,90.8) scale(1.0)"><path d="M1.9 1.8 L6.7 6 M6.7 1.8 L1.9 6" stroke="#858585" stroke-width="3.5" stroke-linecap="round" fill="none"/><path d="M1.9 1.8 L6.7 6 M6.7 1.8 L1.9 6" stroke="#b8b8b8" stroke-width="2" stroke-linecap="round" fill="none"/></g><g transform="translate(349.4,90.8) scale(1.0)"><path d="M1.9 1.8 L6.7 6 M6.7 1.8 L1.9 6" stroke="#858585" stroke-width="3.5" stroke-linecap="round" fill="none"/><path d="M1.9 1.8 L6.7 6 M6.7 1.8 L1.9 6" stroke="#b8b8b8" stroke-width="2" stroke-linecap="round" fill="none"/></g><g transform="translate(375.4,90.8) scale(1.0)"><path d="M1.9 1.8 L6.7 6 M6.7 1.8 L1.9 6" stroke="#858585" stroke-width="3.5" stroke-linecap="round" fill="none"/><path d="M1.9 1.8 L6.7 6 M6.7 1.8 L1.9 6" stroke="#b8b8b8" stroke-width="2" stroke-linecap="round" fill="none"/></g><path d="M306 90 h6 l-3 3.4 z" fill="#5e5e5e"/><rect x="393.0" y="79" width="1" height="23" fill="#b3b8c6"/><rect x="402.5" y="82.5" width="17" height="16" fill="#ebebeb" stroke="#c1c1c1"/><rect x="402" y="99" width="18" height="1" fill="#f4f4f6"/><rect x="403.5" y="94.5" width="3.6" height="3.6" fill="#dcdcdc" stroke="#c4c4c4"/><path d="M415 88 l-5 -5 v3 h-4.6 q-1.8 0 -1.8 2 q0 2 1.8 2 h4.6 v3 z" fill="#c8c8c8" stroke="#a4a4a4" stroke-width="0.9"/><g transform="translate(412.4,91) scale(1.08)"><path d="M1.9 1.8 L6.7 6 M6.7 1.8 L1.9 6" stroke="#b4b4b4" stroke-width="3.5" stroke-linecap="round" fill="none"/><path d="M1.9 1.8 L6.7 6 M6.7 1.8 L1.9 6" stroke="#fbfbfb" stroke-width="2" stroke-linecap="round" fill="none"/></g><path d="M427 90 h6 l-3 3.4 z" fill="#5e5e5e"/><rect x="440.5" y="82.5" width="17" height="16" fill="#ebebeb" stroke="#c1c1c1"/><rect x="440" y="99" width="18" height="1" fill="#f4f4f6"/><rect x="441.5" y="94.5" width="3.6" height="3.6" fill="#dcdcdc" stroke="#c4c4c4"/><path d="M443 88 l5 -5 v3 h4.6 q1.8 0 1.8 2 q0 2 -1.8 2 h-4.6 v3 z" fill="#c8c8c8" stroke="#a4a4a4" stroke-width="0.9"/><g transform="translate(450.4,91) scale(1.08)"><path d="M1.9 1.8 L6.7 6 M6.7 1.8 L1.9 6" stroke="#b4b4b4" stroke-width="3.5" stroke-linecap="round" fill="none"/><path d="M1.9 1.8 L6.7 6 M6.7 1.8 L1.9 6" stroke="#fbfbfb" stroke-width="2" stroke-linecap="round" fill="none"/></g><path d="M465 90 h6 l-3 3.4 z" fill="#5e5e5e"/><rect x="476.5" y="82.5" width="17" height="16" fill="#ffffa8" stroke="#f0a020" stroke-width="1.2"/><path d="M480 83.5 Q484 81.5 488 84 L491.5 86.4 L487.6 86.8 Q484.6 88.6 482 86.8 Z M478.6 90 Q482.6 88 486.6 90.5 L489.6 93 L486 93.4 Q483 95.2 480.6 93.4 Z" fill="#6a2020"/><path d="M479 84.2 L481.6 87 M477.4 90.6 L480 93.6" stroke="#000" stroke-width="0.9"/><rect x="478" y="94.6" width="3.4" height="3.4" fill="#f0b030"/><g transform="translate(486.4,91.8) scale(1.0)"><path d="M1.9 1.8 L6.7 6 M6.7 1.8 L1.9 6" stroke="#303010" stroke-width="3.5" stroke-linecap="round" fill="none"/><path d="M1.9 1.8 L6.7 6 M6.7 1.8 L1.9 6" stroke="#ffffa8" stroke-width="2" stroke-linecap="round" fill="none"/></g><rect x="501.5" y="82.5" width="17" height="16" fill="#ebebeb" stroke="#c1c1c1"/><rect x="501" y="99" width="18" height="1" fill="#f4f4f6"/><rect x="502.5" y="94.5" width="3.6" height="3.6" fill="#dcdcdc" stroke="#c4c4c4"/><ellipse cx="510" cy="85.6" rx="6" ry="2" fill="#f4f4f4" stroke="#a0a0a0" stroke-width="0.9"/><path d="M504.4 86.6 L508.8 91.4 V95 H511.2 V91.4 L515.6 86.6" fill="#d8d8d8" stroke="#a0a0a0" stroke-width="0.8"/><text x="510.6" y="99" font-family="Liberation Sans, sans-serif" font-size="9" font-weight="700" fill="#8a8a8a" textLength="8.6" lengthAdjust="spacingAndGlyphs">Xf</text><rect x="526.5" y="82.5" width="17" height="16" fill="#ebebeb" stroke="#c1c1c1"/><rect x="526" y="99" width="18" height="1" fill="#f4f4f6"/><text x="535" y="90.2" font-family="Liberation Sans, sans-serif" font-size="8.6" fill="#8a8a8a" text-anchor="middle" transform="translate(535,0) scale(1.0,1) translate(-535,0)">Nak</text><rect x="529" y="91.2" width="6" height="1.5" fill="#a4a4a4"/><rect x="527.5" y="94.5" width="3.6" height="3.6" fill="#dcdcdc" stroke="#c4c4c4"/><g transform="translate(536.4,91) scale(1.08)"><path d="M1.9 1.8 L6.7 6 M6.7 1.8 L1.9 6" stroke="#b4b4b4" stroke-width="3.5" stroke-linecap="round" fill="none"/><path d="M1.9 1.8 L6.7 6 M6.7 1.8 L1.9 6" stroke="#fbfbfb" stroke-width="2" stroke-linecap="round" fill="none"/></g><rect x="551.5" y="82.5" width="17" height="16" fill="#ebebeb" stroke="#c1c1c1"/><rect x="551" y="99" width="18" height="1" fill="#f4f4f6"/><rect x="552.5" y="94.5" width="3.6" height="3.6" fill="#dcdcdc" stroke="#c4c4c4"/><g transform="translate(561.4,91) scale(1.08)"><path d="M1.9 1.8 L6.7 6 M6.7 1.8 L1.9 6" stroke="#b4b4b4" stroke-width="3.5" stroke-linecap="round" fill="none"/><path d="M1.9 1.8 L6.7 6 M6.7 1.8 L1.9 6" stroke="#fbfbfb" stroke-width="2" stroke-linecap="round" fill="none"/></g><text x="552.6" y="90" font-family="Liberation Sans, sans-serif" font-size="8.4" font-weight="700" fill="#707070">Tr</text><rect x="561" y="84" width="6.4" height="1.2" fill="#b0b0b0"/><rect x="561" y="86.6" width="6.4" height="1.2" fill="#c4c4c4"/><rect x="553" y="90.6" width="6.4" height="1.4" fill="#a8a8a8"/><rect x="561" y="90.6" width="6.4" height="1.2" fill="#c4c4c4"/><rect x="576.9" y="79" width="1" height="23" fill="#b3b8c6"/><rect x="584.5" y="82.5" width="17" height="16" fill="#ebebeb" stroke="#c1c1c1"/><rect x="584" y="99" width="18" height="1" fill="#f4f4f6"/><text x="593" y="90.2" font-family="Liberation Sans, sans-serif" font-size="8.4" fill="#8a8a8a" text-anchor="middle" transform="translate(593,0) scale(1.0,1) translate(-593,0)">SOF</text><rect x="587" y="91.2" width="6" height="1.5" fill="#a4a4a4"/><rect x="585.5" y="94.5" width="3.6" height="3.6" fill="#dcdcdc" stroke="#c4c4c4"/><g transform="translate(594.4,91) scale(1.08)"><path d="M1.9 1.8 L6.7 6 M6.7 1.8 L1.9 6" stroke="#b4b4b4" stroke-width="3.5" stroke-linecap="round" fill="none"/><path d="M1.9 1.8 L6.7 6 M6.7 1.8 L1.9 6" stroke="#fbfbfb" stroke-width="2" stroke-linecap="round" fill="none"/></g><rect x="609.5" y="82.5" width="17" height="16" fill="#ebebeb" stroke="#c1c1c1"/><rect x="609" y="99" width="18" height="1" fill="#f4f4f6"/><rect x="610.5" y="94.5" width="3.6" height="3.6" fill="#dcdcdc" stroke="#c4c4c4"/><g transform="translate(619.4,91) scale(1.08)"><path d="M1.9 1.8 L6.7 6 M6.7 1.8 L1.9 6" stroke="#b4b4b4" stroke-width="3.5" stroke-linecap="round" fill="none"/><path d="M1.9 1.8 L6.7 6 M6.7 1.8 L1.9 6" stroke="#fbfbfb" stroke-width="2" stroke-linecap="round" fill="none"/></g><path d="M610 90 L612.4 83" stroke="#fff" stroke-width="1.6"/><path d="M621.6 84.4 Q619.6 85.4 620.6 87 Q622 87.4 622 88.6" fill="none" stroke="#8c8c8c" stroke-width="1.2"/><rect x="616.4" y="85.4" width="1.2" height="1.2" fill="#a0a0a0"/><path d="M615 92.6 h3.4 l1 1" stroke="#b0b0b0" fill="none"/><rect x="634.9" y="79" width="1" height="23" fill="#b3b8c6"/><rect x="644.5" y="82.5" width="17" height="16" fill="#ebebeb" stroke="#c1c1c1"/><rect x="644" y="99" width="18" height="1" fill="#f4f4f6"/><text x="653" y="90.2" font-family="Liberation Sans, sans-serif" font-size="9" fill="#8a8a8a" text-anchor="middle" transform="translate(653,0) scale(1.05,1) translate(-653,0)">TS</text><rect x="647" y="91.2" width="6" height="1.5" fill="#a4a4a4"/><rect x="645.5" y="94.5" width="3.6" height="3.6" fill="#dcdcdc" stroke="#c4c4c4"/><g transform="translate(654.4,91) scale(1.08)"><path d="M1.9 1.8 L6.7 6 M6.7 1.8 L1.9 6" stroke="#b4b4b4" stroke-width="3.5" stroke-linecap="round" fill="none"/><path d="M1.9 1.8 L6.7 6 M6.7 1.8 L1.9 6" stroke="#fbfbfb" stroke-width="2" stroke-linecap="round" fill="none"/></g><path d="M669 90 h6 l-3 3.4 z" fill="#5e5e5e"/><rect x="682.5" y="82.5" width="17" height="16" fill="#ebebeb" stroke="#c1c1c1"/><rect x="682" y="99" width="18" height="1" fill="#f4f4f6"/><text x="691" y="90.2" font-family="Liberation Sans, sans-serif" font-size="9" fill="#8a8a8a" text-anchor="middle" transform="translate(691,0) scale(1.05,1) translate(-691,0)">LC</text><rect x="685" y="91.2" width="6" height="1.5" fill="#a4a4a4"/><rect x="683.5" y="94.5" width="3.6" height="3.6" fill="#dcdcdc" stroke="#c4c4c4"/><g transform="translate(692.4,91) scale(1.08)"><path d="M1.9 1.8 L6.7 6 M6.7 1.8 L1.9 6" stroke="#b4b4b4" stroke-width="3.5" stroke-linecap="round" fill="none"/><path d="M1.9 1.8 L6.7 6 M6.7 1.8 L1.9 6" stroke="#fbfbfb" stroke-width="2" stroke-linecap="round" fill="none"/></g><path d="M707 90 h6 l-3 3.4 z" fill="#5e5e5e"/><rect x="720.5" y="82.5" width="17" height="16" fill="#ebebeb" stroke="#c1c1c1"/><rect x="720" y="99" width="18" height="1" fill="#f4f4f6"/><text x="729" y="90.2" font-family="Liberation Sans, sans-serif" font-size="9" fill="#8a8a8a" text-anchor="middle" transform="translate(729,0) scale(1.05,1) translate(-729,0)">BE</text><rect x="723" y="91.2" width="6" height="1.5" fill="#a4a4a4"/><rect x="721.5" y="94.5" width="3.6" height="3.6" fill="#dcdcdc" stroke="#c4c4c4"/><g transform="translate(730.4,91) scale(1.08)"><path d="M1.9 1.8 L6.7 6 M6.7 1.8 L1.9 6" stroke="#b4b4b4" stroke-width="3.5" stroke-linecap="round" fill="none"/><path d="M1.9 1.8 L6.7 6 M6.7 1.8 L1.9 6" stroke="#fbfbfb" stroke-width="2" stroke-linecap="round" fill="none"/></g><path d="M745 90 h6 l-3 3.4 z" fill="#5e5e5e"/><rect x="758.5" y="82.5" width="17" height="16" fill="#ebebeb" stroke="#c1c1c1"/><rect x="758" y="99" width="18" height="1" fill="#f4f4f6"/><rect x="759.5" y="94.5" width="3.6" height="3.6" fill="#dcdcdc" stroke="#c4c4c4"/><g transform="translate(768.4,91) scale(1.08)"><path d="M1.9 1.8 L6.7 6 M6.7 1.8 L1.9 6" stroke="#b4b4b4" stroke-width="3.5" stroke-linecap="round" fill="none"/><path d="M1.9 1.8 L6.7 6 M6.7 1.8 L1.9 6" stroke="#fbfbfb" stroke-width="2" stroke-linecap="round" fill="none"/></g><rect x="759.5" y="83" width="8" height="5.6" fill="#e0e0e0"/><rect x="765" y="83" width="11" height="3" fill="#b8b8b8"/><rect x="767.6" y="86" width="8.4" height="4" fill="#c8c8c8"/><path d="M783 90 h6 l-3 3.4 z" fill="#5e5e5e"/><rect x="796.5" y="82.5" width="17" height="16" fill="#ebebeb" stroke="#c1c1c1"/><rect x="796" y="99" width="18" height="1" fill="#f4f4f6"/><text x="805" y="90.2" font-family="Liberation Sans, sans-serif" font-size="9" fill="#8a8a8a" text-anchor="middle" transform="translate(805,0) scale(1.05,1) translate(-805,0)">OS</text><rect x="799" y="91.2" width="6" height="1.5" fill="#a4a4a4"/><rect x="797.5" y="94.5" width="3.6" height="3.6" fill="#dcdcdc" stroke="#c4c4c4"/><g transform="translate(806.4,91) scale(1.08)"><path d="M1.9 1.8 L6.7 6 M6.7 1.8 L1.9 6" stroke="#b4b4b4" stroke-width="3.5" stroke-linecap="round" fill="none"/><path d="M1.9 1.8 L6.7 6 M6.7 1.8 L1.9 6" stroke="#fbfbfb" stroke-width="2" stroke-linecap="round" fill="none"/></g><path d="M821 90 h6 l-3 3.4 z" fill="#5e5e5e"/><rect x="834.5" y="82.5" width="17" height="16" fill="#ebebeb" stroke="#c1c1c1"/><rect x="834" y="99" width="18" height="1" fill="#f4f4f6"/><text x="843" y="90.2" font-family="Liberation Sans, sans-serif" font-size="8.6" fill="#8a8a8a" text-anchor="middle" transform="translate(843,0) scale(0.95,1) translate(-843,0)">TLP</text><rect x="837" y="91.2" width="6" height="1.5" fill="#a4a4a4"/><rect x="835.5" y="94.5" width="3.6" height="3.6" fill="#dcdcdc" stroke="#c4c4c4"/><g transform="translate(844.4,91) scale(1.08)"><path d="M1.9 1.8 L6.7 6 M6.7 1.8 L1.9 6" stroke="#b4b4b4" stroke-width="3.5" stroke-linecap="round" fill="none"/><path d="M1.9 1.8 L6.7 6 M6.7 1.8 L1.9 6" stroke="#fbfbfb" stroke-width="2" stroke-linecap="round" fill="none"/></g><path d="M859 90 h6 l-3 3.4 z" fill="#5e5e5e"/><rect x="872.5" y="82.5" width="17" height="16" fill="#ebebeb" stroke="#c1c1c1"/><rect x="872" y="99" width="18" height="1" fill="#f4f4f6"/><text x="881" y="90.2" font-family="Liberation Sans, sans-serif" font-size="8" fill="#8a8a8a" text-anchor="middle" transform="translate(881,0) scale(0.95,1) translate(-881,0)">Misc</text><rect x="875" y="91.2" width="6" height="1.5" fill="#a4a4a4"/><rect x="873.5" y="94.5" width="3.6" height="3.6" fill="#dcdcdc" stroke="#c4c4c4"/><g transform="translate(882.4,91) scale(1.08)"><path d="M1.9 1.8 L6.7 6 M6.7 1.8 L1.9 6" stroke="#b4b4b4" stroke-width="3.5" stroke-linecap="round" fill="none"/><path d="M1.9 1.8 L6.7 6 M6.7 1.8 L1.9 6" stroke="#fbfbfb" stroke-width="2" stroke-linecap="round" fill="none"/></g><path d="M897 90 h6 l-3 3.4 z" fill="#5e5e5e"/><rect x="908.5" y="82.5" width="17" height="16" fill="#ebebeb" stroke="#c1c1c1"/><rect x="908" y="99" width="18" height="1" fill="#f4f4f6"/><text x="917" y="90.2" font-family="Liberation Sans, sans-serif" font-size="7.6" fill="#8a8a8a" text-anchor="middle" transform="translate(917,0) scale(0.92,1) translate(-917,0)">HopX</text><rect x="911" y="91.2" width="6" height="1.5" fill="#a4a4a4"/><rect x="909.5" y="94.5" width="3.6" height="3.6" fill="#dcdcdc" stroke="#c4c4c4"/><g transform="translate(918.4,91) scale(1.08)"><path d="M1.9 1.8 L6.7 6 M6.7 1.8 L1.9 6" stroke="#b4b4b4" stroke-width="3.5" stroke-linecap="round" fill="none"/><path d="M1.9 1.8 L6.7 6 M6.7 1.8 L1.9 6" stroke="#fbfbfb" stroke-width="2" stroke-linecap="round" fill="none"/></g><rect x="933.9" y="79" width="1" height="23" fill="#b3b8c6"/><rect x="943.5" y="82.5" width="17" height="16" fill="#ebebeb" stroke="#c1c1c1"/><rect x="943" y="99" width="18" height="1" fill="#f4f4f6"/><rect x="944.5" y="94.5" width="3.6" height="3.6" fill="#dcdcdc" stroke="#c4c4c4"/><g transform="translate(953.4,91) scale(1.08)"><path d="M1.9 1.8 L6.7 6 M6.7 1.8 L1.9 6" stroke="#b4b4b4" stroke-width="3.5" stroke-linecap="round" fill="none"/><path d="M1.9 1.8 L6.7 6 M6.7 1.8 L1.9 6" stroke="#fbfbfb" stroke-width="2" stroke-linecap="round" fill="none"/></g><text x="946.4" y="90.6" font-family="Liberation Sans, sans-serif" font-size="9.6" fill="#707070" textLength="12.4" lengthAdjust="spacingAndGlyphs">PD</text><path d="M968 90 h6 l-3 3.4 z" fill="#5e5e5e"/><g fill="#3c3c3c"><rect x="981" y="80" width="1" height="1"/><rect x="985" y="80" width="1" height="1"/><rect x="983" y="82" width="1" height="1"/><rect x="981" y="84" width="1" height="1"/><rect x="985" y="84" width="1" height="1"/><rect x="983" y="86" width="1" height="1"/><rect x="981" y="88" width="1" height="1"/><rect x="985" y="88" width="1" height="1"/><rect x="983" y="90" width="1" height="1"/><rect x="981" y="92" width="1" height="1"/><rect x="985" y="92" width="1" height="1"/><rect x="983" y="94" width="1" height="1"/><rect x="981" y="96" width="1" height="1"/><rect x="985" y="96" width="1" height="1"/><rect x="983" y="98" width="1" height="1"/><rect x="981" y="100" width="1" height="1"/><rect x="985" y="100" width="1" height="1"/></g><g transform="translate(992,82)"><rect x="5" y="0.5" width="7" height="16" rx="1" fill="#9a9a9a"/><rect x="5.6" y="16" width="5.8" height="1.6" fill="#7c7c7c"/><path d="M0 0.6 H5 V4.6 H2.6 Z M17 0.6 H12 V4.6 H14.4 Z" fill="#808080"/><circle cx="8.5" cy="3.0" r="2.1" fill="#c0c0c0"/><rect x="1.4" y="1.6" width="1" height="1" fill="#d8d8d8"/><rect x="14.6" y="1.6" width="1" height="1" fill="#d8d8d8"/><path d="M0 6.6 H5 V10.6 H2.6 Z M17 6.6 H12 V10.6 H14.4 Z" fill="#808080"/><circle cx="8.5" cy="8.6" r="2.1" fill="#c0c0c0"/><rect x="1.4" y="7.6" width="1" height="1" fill="#d8d8d8"/><rect x="14.6" y="7.6" width="1" height="1" fill="#d8d8d8"/><path d="M0 12.6 H5 V16.6 H2.6 Z M17 12.6 H12 V16.6 H14.4 Z" fill="#808080"/><circle cx="8.5" cy="14.2" r="2.1" fill="#c0c0c0"/><rect x="1.4" y="13.6" width="1" height="1" fill="#d8d8d8"/><rect x="14.6" y="13.6" width="1" height="1" fill="#d8d8d8"/></g><rect x="1017.5" y="82.5" width="18" height="17" rx="3" fill="#bcbcbc" stroke="#7c7c7c" stroke-width="1.1"/><text x="1026.5" y="96.4" font-family="Liberation Serif, serif" font-size="15" font-style="italic" fill="#707070" stroke="#707070" stroke-width="0.3" text-anchor="middle" textLength="11" lengthAdjust="spacingAndGlyphs">B</text><rect x="1041.5" y="82.5" width="18" height="17" rx="3" fill="#bcbcbc" stroke="#7c7c7c" stroke-width="1.1"/><text x="1050.5" y="96.4" font-family="Liberation Serif, serif" font-size="15" font-style="italic" fill="#707070" stroke="#707070" stroke-width="0.3" text-anchor="middle" textLength="8" lengthAdjust="spacingAndGlyphs">I</text><rect x="1065.5" y="80.5" width="86" height="21" fill="#d9deeb" stroke="#9aa5b8" stroke-width="1"/><text x="1070" y="92.7" font-family="Liberation Sans, sans-serif" font-size="11.5" fill="#6d6d6d" stroke="#6d6d6d" stroke-width="0.3" textLength="48.6" lengthAdjust="spacingAndGlyphs">Run once</text><path d="M1141.6 90 h6 l-3 3.4 z" fill="#5e5e5e"/><g fill="#3c3c3c"><rect x="1159" y="80" width="1" height="1"/><rect x="1163" y="80" width="1" height="1"/><rect x="1161" y="82" width="1" height="1"/><rect x="1159" y="84" width="1" height="1"/><rect x="1163" y="84" width="1" height="1"/><rect x="1161" y="86" width="1" height="1"/><rect x="1159" y="88" width="1" height="1"/><rect x="1163" y="88" width="1" height="1"/><rect x="1161" y="90" width="1" height="1"/><rect x="1159" y="92" width="1" height="1"/><rect x="1163" y="92" width="1" height="1"/><rect x="1161" y="94" width="1" height="1"/><rect x="1159" y="96" width="1" height="1"/><rect x="1163" y="96" width="1" height="1"/><rect x="1161" y="98" width="1" height="1"/><rect x="1159" y="100" width="1" height="1"/><rect x="1163" y="100" width="1" height="1"/></g><g transform="translate(1169,82)"><rect x="0.75" y="0.75" width="17.5" height="16.5" fill="#a8d8d0" stroke="#000080" stroke-width="1.5"/><path d="M4.5 2.6 H6.5 L5 6.6 H7 L8.6 2.6 H10.4 L8.4 8 H2.6 Z" fill="#000"/><path d="M8.6 4 H12.6 V2 L16.8 5.6 L12.6 9.2 V7.2 H8 Z" fill="#a04c00"/><path d="M2.4 13.6 H6.4" stroke="#0000ff" stroke-width="1.1"/><path d="M6.4 11.4 Q9 9.6 12.4 11 L13 13 L13 14.4 Q10 16.8 6.4 15.4 Z" fill="#0000ff"/><path d="M13.6 13.6 L16.4 11.4 M13.6 14.6 L15.6 13.4" stroke="#0000ff" stroke-width="1.1"/></g><text x="1191.6" y="94.6" font-family="Liberation Sans, sans-serif" font-size="11.5" fill="#000" stroke="#000" stroke-width="0.35" textLength="84.6" lengthAdjust="spacingAndGlyphs">USB/PD Exerciser</text><g fill="#3c3c3c"><rect x="1298" y="80" width="1" height="1"/><rect x="1302" y="80" width="1" height="1"/><rect x="1300" y="82" width="1" height="1"/><rect x="1298" y="84" width="1" height="1"/><rect x="1302" y="84" width="1" height="1"/><rect x="1300" y="86" width="1" height="1"/><rect x="1298" y="88" width="1" height="1"/><rect x="1302" y="88" width="1" height="1"/><rect x="1300" y="90" width="1" height="1"/><rect x="1298" y="92" width="1" height="1"/><rect x="1302" y="92" width="1" height="1"/><rect x="1300" y="94" width="1" height="1"/><rect x="1298" y="96" width="1" height="1"/><rect x="1302" y="96" width="1" height="1"/><rect x="1300" y="98" width="1" height="1"/><rect x="1298" y="100" width="1" height="1"/><rect x="1302" y="100" width="1" height="1"/></g><rect x="1305.5" y="79.5" width="24" height="23" fill="#fdf0d4" stroke="#e5c365" stroke-width="1"/><rect x="1310" y="82.6" width="17" height="16.4" fill="#fff"/><rect x="1310.6" y="83.6" width="9.6" height="4" rx="0.6" fill="#20ffff" stroke="#383838" stroke-width="1.1"/><rect x="1324.6" y="83.6" width="4" height="4" rx="0.6" fill="#00ff00" stroke="#383838" stroke-width="1.1"/><rect x="1313.6" y="90.6" width="9.6" height="4" rx="0.6" fill="#ffe000" stroke="#383838" stroke-width="1.1"/><rect x="1310.6" y="97.4" width="9.6" height="3" rx="0.6" fill="#c000ff" stroke="#383838" stroke-width="1.1"/><rect x="1324.6" y="97.4" width="3" height="3" rx="0.6" fill="#00ff00" stroke="#383838" stroke-width="1.1"/><rect x="1327" y="82" width="3" height="18" fill="#fdf0d4"/><rect x="1309" y="99" width="20" height="3" fill="#fdf0d4"/><rect x="1334" y="82.6" width="17" height="16.4" fill="#fff"/><rect x="1335.6" y="83.6" width="7.6" height="3" rx="0.6" fill="#20ffff" stroke="#383838" stroke-width="1.1"/><rect x="1346.6" y="83.6" width="5" height="3" rx="0.6" fill="#00ff00" stroke="#383838" stroke-width="1.1"/><rect x="1337.6" y="88.6" width="7.6" height="3" rx="0.6" fill="#ffe000" stroke="#383838" stroke-width="1.1"/><rect x="1348.6" y="88.6" width="3" height="3" rx="0.6" fill="#d0ff80" stroke="#383838" stroke-width="1.1"/><rect x="1335.6" y="93.6" width="7.6" height="3" rx="0.6" fill="#c000ff" stroke="#383838" stroke-width="1.1"/><rect x="1346.6" y="93.6" width="4" height="3" rx="0.6" fill="#00ff00" stroke="#383838" stroke-width="1.1"/><rect x="1351" y="82" width="4" height="18" fill="#d9deeb"/><path d="M1359.6 99 V84.6 Q1359.6 83.2 1361 83.2 H1374 Q1375.4 83.2 1375.4 84.6 V99" fill="#fff" stroke="#909090" stroke-width="1.2"/><g stroke="#e0e4f0" stroke-width="0.8"><path d="M1360 87.6 H1375 M1360 91.6 H1375 M1360 95.6 H1375 M1364.4 84 V99 M1372.4 84 V99"/></g><rect x="1361.4" y="85" width="1.2" height="1.2" fill="#000"/><rect x="1366.4" y="85" width="1.2" height="1.2" fill="#000"/><rect x="1368.4" y="85" width="2.6" height="1.2" fill="#000"/><rect x="1360.4" y="88" width="3.8" height="3.2" fill="#40ffff"/><rect x="1365" y="88" width="7" height="3.2" fill="#00ff00"/><rect x="1360.4" y="92" width="3.8" height="3.2" fill="#ffd800"/><rect x="1373" y="92" width="1.8" height="3.2" fill="#d0ff80"/><rect x="1360.4" y="96" width="3.8" height="3" fill="#c000ff"/><rect x="1365" y="96" width="7" height="3" fill="#00ff00"/><path d="M1384.6 99 V84.6 Q1384.6 83.2 1386 83.2 H1399 Q1400.4 83.2 1400.4 84.6 V99" fill="#fff" stroke="#909090" stroke-width="1.2"/><g stroke="#e0e4f0" stroke-width="0.8"><path d="M1385 87.6 H1400 M1385 91.6 H1400 M1385 95.6 H1400 M1389.4 84 V99 M1397.4 84 V99"/></g><rect x="1386.4" y="85" width="1.2" height="1.2" fill="#000"/><rect x="1391.4" y="85" width="1.2" height="1.2" fill="#000"/><rect x="1393.4" y="85" width="2.6" height="1.2" fill="#000"/></svg>
<div style="left:1px;top:106px;width:1217px;height:1px;background:#f4f5f9;"></div>
<div style="left:1px;top:107px;width:1px;height:491px;background:#f0f0f0;"></div>
<div style="left:2px;top:107px;width:1216px;height:22px;background:linear-gradient(#50648a,#3c4f76);"></div>
<div class="t" style="left:6.40px;top:111px;font-size:11.05px;line-height:16px;height:16px;color:#fff;transform:scaleX(0.9799);transform-origin:0 50%;">Trace View</div>
<svg style="left:1203px;top:114px;" width="10" height="10" viewBox="0 0 10 10"><path d="M1 1 L9 9 M9 1 L1 9" stroke="#fff" stroke-width="1.6" fill="none"/></svg>
<div style="left:2px;top:129px;width:1216px;height:1px;background:#e4e4e4;"></div>
<div style="left:2px;top:130px;width:1216px;height:2px;background:linear-gradient(#a8a8a8,#707070);"></div>
<div style="left:2px;top:132px;width:1216px;height:445px;background:#e1e1e1;"></div>
<div style="left:2px;top:132px;width:2px;height:445px;background:#f4f4f4;"></div>
<div class="clip" style="left:4px;top:132px;width:1195px;height:429px;">
<div style="left:0;top:0;width:1195px;height:48px;background:#f6f6f6"></div>
<div style="left:0;top:2px;width:1195px;height:43.4px;background:#000080"></div>
<div style="left:0;top:4px;width:1195px;height:39.4px;background:#9ab7e6"></div>
<div class="rows">
<div class="row" style="top:8px">
<div class="cell" style="left:0px;width:80px"><div class="h" style="background:#40e47c;color:#000"><span>Transfer</span></div><div class="v" style="background:#40e47c;color:#000"><span>235</span></div></div>
<div class="cell" style="left:79px;width:24px"><div class="h" style="background:#808040;color:#fff"><span>F</span></div><div class="v" style="background:#fff;color:#000"><span>S</span></div></div>
<div class="cell" style="left:106px;width:64px"><div class="h" style="background:#400040;color:#fff"><span>Interrupt</span></div><div class="v" style="background:#fff;color:#000"><span>IN</span></div></div>
<div class="cell" style="left:169px;width:40px"><div class="h" style="background:#000040;color:#fff"><span>ADDR</span></div><div class="v" style="background:#fff;color:#000"><span>30</span></div></div>
<div class="cell" style="left:208px;width:40px"><div class="h" style="background:#00ff80;color:#000"><span>ENDP</span></div><div class="v" style="background:#fff;color:#000"><span>2</span></div></div>
<div class="cell" style="left:251px;width:58px"><div class="h" style="background:#7a5944;color:#fff"><span>Report ID</span></div><div class="v" style="background:#fff;color:#000"><span>0x02</span></div></div>
<div class="cell" style="left:312px;width:81px"><div class="h" style="background:#7a5944;color:#fff"><span class=u>Usage Page</span></div><div class="v" style="background:#7a5944;color:#fff"><span>Button (0x09)</span></div></div>
<svg style="left:313.4px;top:1px" width="5" height="7" viewBox="0 0 5 7"><path d="M0 0 L3.6 3 L0 6 Z" fill="#fff"/></svg>
<div class="cell" style="left:396px;width:53px"><div class="h" style="background:#d9a07a;color:#fff"><span>Button 1</span></div><div class="v" style="background:#fff;color:#000"><span>0</span></div></div>
<div class="cell" style="left:448px;width:53px"><div class="h" style="background:#d9a07a;color:#fff"><span>Button 2</span></div><div class="v" style="background:#fff;color:#000"><span>0</span></div></div>
<div class="cell" style="left:500px;width:53px"><div class="h" style="background:#d9a07a;color:#fff"><span>Button 3</span></div><div class="v" style="background:#fff;color:#000"><span>0</span></div></div>
<div class="cell" style="left:552px;width:53px"><div class="h" style="background:#d9a07a;color:#fff"><span>Button 4</span></div><div class="v" style="background:#fff;color:#000"><span>0</span></div></div>
<div class="cell" style="left:604px;width:53px"><div class="h" style="background:#d9a07a;color:#fff"><span>Button 5</span></div><div class="v" style="background:#fff;color:#000"><span>0</span></div></div>
<div class="cell" style="left:656px;width:53px"><div class="h" style="background:#d9a07a;color:#fff"><span>Button 6</span></div><div class="v" style="background:#fff;color:#000"><span>0</span></div></div>
<div class="cell" style="left:708px;width:53px"><div class="h" style="background:#d9a07a;color:#fff"><span>Button 7</span></div><div class="v" style="background:#fff;color:#000"><span>0</span></div></div>
<div class="cell" style="left:760px;width:53px"><div class="h" style="background:#d9a07a;color:#fff"><span>Button 8</span></div><div class="v" style="background:#fff;color:#000"><span>0</span></div></div>
<div class="cell" style="left:812px;width:53px"><div class="h" style="background:#d9a07a;color:#fff"><span>Button 9</span></div><div class="v" style="background:#fff;color:#000"><span>0</span></div></div>
<div class="cell" style="left:864px;width:60px"><div class="h" style="background:#d9a07a;color:#fff"><span>Button 10</span></div><div class="v" style="background:#fff;color:#000"><span>0</span></div></div>
<div class="cell" style="left:923px;width:59px"><div class="h" style="background:#d9a07a;color:#fff"><span>Button 11</span></div><div class="v" style="background:#fff;color:#000"><span>0</span></div></div>
<div class="cell" style="left:981px;width:60px"><div class="h" style="background:#d9a07a;color:#fff"><span>Button 12</span></div><div class="v" style="background:#fff;color:#000"><span>0</span></div></div>
<div class="cell" style="left:1040px;width:60px"><div class="h" style="background:#d9a07a;color:#fff"><span>Button 13</span></div><div class="v" style="background:#fff;color:#000"><span>0</span></div></div>
<div class="cell" style="left:1099px;width:60px"><div class="h" style="background:#d9a07a;color:#fff"><span>Button 14</span></div><div class="v" style="background:#fff;color:#000"><span>0</span></div></div>
<div class="cell" style="left:1158px;width:60px"><div class="h" style="background:#d9a07a;color:#fff"><span>Button 15</span></div><div class="v" style="background:#fff;color:#000"><span>0</span></div></div>
</div>
<div class="row" style="top:47px">
<div class="cell" style="left:0px;width:80px"><div class="h" style="background:#40e47c;color:#000"><span>Transfer</span></div><div class="v" style="background:#40e47c;color:#000"><span>236</span></div></div>
<div class="cell" style="left:79px;width:24px"><div class="h" style="background:#808040;color:#fff"><span>F</span></div><div class="v" style="background:#fff;color:#000"><span>S</span></div></div>
<div class="cell" style="left:106px;width:64px"><div class="h" style="background:#400040;color:#fff"><span>Interrupt</span></div><div class="v" style="background:#fff;color:#000"><span>IN</span></div></div>
<div class="cell" style="left:169px;width:40px"><div class="h" style="background:#000040;color:#fff"><span>ADDR</span></div><div class="v" style="background:#fff;color:#000"><span>30</span></div></div>
<div class="cell" style="left:208px;width:40px"><div class="h" style="background:#00ff80;color:#000"><span>ENDP</span></div><div class="v" style="background:#fff;color:#000"><span>2</span></div></div>
<div class="cell" style="left:251px;width:58px"><div class="h" style="background:#7a5944;color:#fff"><span>Report ID</span></div><div class="v" style="background:#fff;color:#000"><span>0x02</span></div></div>
<div class="cell" style="left:312px;width:81px"><div class="h" style="background:#7a5944;color:#fff"><span class=u>Usage Page</span></div><div class="v" style="background:#7a5944;color:#fff"><span>Button (0x09)</span></div></div>
<svg style="left:313.4px;top:1px" width="5" height="7" viewBox="0 0 5 7"><path d="M0 0 L3.6 3 L0 6 Z" fill="#fff"/></svg>
<div class="cell" style="left:396px;width:53px"><div class="h" style="background:#d9a07a;color:#fff"><span>Button 1</span></div><div class="v" style="background:#fff;color:#000"><span>0</span></div></div>
<div class="cell" style="left:448px;width:53px"><div class="h" style="background:#d9a07a;color:#fff"><span>Button 2</span></div><div class="v" style="background:#fff;color:#000"><span>0</span></div></div>
<div class="cell" style="left:500px;width:53px"><div class="h" style="background:#d9a07a;color:#fff"><span>Button 3</span></div><div class="v" style="background:#fff;color:#000"><span>0</span></div></div>
<div class="cell" style="left:552px;width:53px"><div class="h" style="background:#d9a07a;color:#fff"><span>Button 4</span></div><div class="v" style="background:#fff;color:#000"><span>0</span></div></div>
<div class="cell" style="left:604px;width:53px"><div class="h" style="background:#d9a07a;color:#fff"><span>Button 5</span></div><div class="v" style="background:#fff;color:#000"><span>0</span></div></div>
<div class="cell" style="left:656px;width:53px"><div class="h" style="background:#d9a07a;color:#fff"><span>Button 6</span></div><div class="v" style="background:#fff;color:#000"><span>0</span></div></div>
<div class="cell" style="left:708px;width:53px"><div class="h" style="background:#d9a07a;color:#fff"><span>Button 7</span></div><div class="v" style="background:#fff;color:#000"><span>0</span></div></div>
<div class="cell" style="left:760px;width:53px"><div class="h" style="background:#d9a07a;color:#fff"><span>Button 8</span></div><div class="v" style="background:#fff;color:#000"><span>0</span></div></div>
<div class="cell" style="left:812px;width:53px"><div class="h" style="background:#d9a07a;color:#fff"><span>Button 9</span></div><div class="v" style="background:#fff;color:#000"><span>0</span></div></div>
<div class="cell" style="left:864px;width:60px"><div class="h" style="background:#d9a07a;color:#fff"><span>Button 10</span></div><div class="v" style="background:#fff;color:#000"><span>0</span></div></div>
<div class="cell" style="left:923px;width:59px"><div class="h" style="background:#d9a07a;color:#fff"><span>Button 11</span></div><div class="v" style="background:#fff;color:#000"><span>0</span></div></div>
<div class="cell" style="left:981px;width:60px"><div class="h" style="background:#d9a07a;color:#fff"><span>Button 12</span></div><div class="v" style="background:#fff;color:#000"><span>0</span></div></div>
<div class="cell" style="left:1040px;width:60px"><div class="h" style="background:#d9a07a;color:#fff"><span>Button 13</span></div><div class="v" style="background:#fff;color:#000"><span>0</span></div></div>
<div class="cell" style="left:1099px;width:60px"><div class="h" style="background:#d9a07a;color:#fff"><span>Button 14</span></div><div class="v" style="background:#fff;color:#000"><span>0</span></div></div>
<div class="cell" style="left:1158px;width:60px"><div class="h" style="background:#d9a07a;color:#fff"><span>Button 15</span></div><div class="v" style="background:#fff;color:#000"><span>0</span></div></div>
</div>
<div class="row" style="top:86px">
<div class="cell" style="left:0px;width:80px"><div class="h" style="background:#40e47c;color:#000"><span>Transfer</span></div><div class="v" style="background:#40e47c;color:#000"><span>237</span></div></div>
<div class="cell" style="left:79px;width:24px"><div class="h" style="background:#808040;color:#fff"><span>F</span></div><div class="v" style="background:#fff;color:#000"><span>S</span></div></div>
<div class="cell" style="left:106px;width:64px"><div class="h" style="background:#400040;color:#fff"><span>Interrupt</span></div><div class="v" style="background:#fff;color:#000"><span>IN</span></div></div>
<div class="cell" style="left:169px;width:40px"><div class="h" style="background:#000040;color:#fff"><span>ADDR</span></div><div class="v" style="background:#fff;color:#000"><span>30</span></div></div>
<div class="cell" style="left:208px;width:40px"><div class="h" style="background:#00ff80;color:#000"><span>ENDP</span></div><div class="v" style="background:#fff;color:#000"><span>2</span></div></div>
<div class="cell" style="left:251px;width:58px"><div class="h" style="background:#7a5944;color:#fff"><span>Report ID</span></div><div class="v" style="background:#fff;color:#000"><span>0x02</span></div></div>
<div class="cell" style="left:312px;width:81px"><div class="h" style="background:#7a5944;color:#fff"><span class=u>Usage Page</span></div><div class="v" style="background:#7a5944;color:#fff"><span>Button (0x09)</span></div></div>
<svg style="left:313.4px;top:1px" width="5" height="7" viewBox="0 0 5 7"><path d="M0 0 L3.6 3 L0 6 Z" fill="#fff"/></svg>
<div class="cell" style="left:396px;width:53px"><div class="h" style="background:#d9a07a;color:#fff"><span>Button 1</span></div><div class="v" style="background:#fff;color:#000"><span>0</span></div></div>
<div class="cell" style="left:448px;width:53px"><div class="h" style="background:#d9a07a;color:#fff"><span>Button 2</span></div><div class="v" style="background:#fff;color:#000"><span>0</span></div></div>
<div class="cell" style="left:500px;width:53px"><div class="h" style="background:#d9a07a;color:#fff"><span>Button 3</span></div><div class="v" style="background:#fff;color:#000"><span>0</span></div></div>
<div class="cell" style="left:552px;width:53px"><div class="h" style="background:#d9a07a;color:#fff"><span>Button 4</span></div><div class="v" style="background:#fff;color:#000"><span>0</span></div></div>
<div class="cell" style="left:604px;width:53px"><div class="h" style="background:#d9a07a;color:#fff"><span>Button 5</span></div><div class="v" style="background:#fff;color:#000"><span>0</span></div></div>
<div class="cell" style="left:656px;width:53px"><div class="h" style="background:#d9a07a;color:#fff"><span>Button 6</span></div><div class="v" style="background:#fff;color:#000"><span>0</span></div></div>
<div class="cell" style="left:708px;width:53px"><div class="h" style="background:#d9a07a;color:#fff"><span>Button 7</span></div><div class="v" style="background:#fff;color:#000"><span>0</span></div></div>
<div class="cell" style="left:760px;width:53px"><div class="h" style="background:#d9a07a;color:#fff"><span>Button 8</span></div><div class="v" style="background:#fff;color:#000"><span>0</span></div></div>
<div class="cell" style="left:812px;width:53px"><div class="h" style="background:#d9a07a;color:#fff"><span>Button 9</span></div><div class="v" style="background:#fff;color:#000"><span>0</span></div></div>
<div class="cell" style="left:864px;width:60px"><div class="h" style="background:#d9a07a;color:#fff"><span>Button 10</span></div><div class="v" style="background:#fff;color:#000"><span>0</span></div></div>
<div class="cell" style="left:923px;width:59px"><div class="h" style="background:#d9a07a;color:#fff"><span>Button 11</span></div><div class="v" style="background:#fff;color:#000"><span>0</span></div></div>
<div class="cell" style="left:981px;width:60px"><div class="h" style="background:#d9a07a;color:#fff"><span>Button 12</span></div><div class="v" style="background:#fff;color:#000"><span>0</span></div></div>
<div class="cell" style="left:1040px;width:60px"><div class="h" style="background:#d9a07a;color:#fff"><span>Button 13</span></div><div class="v" style="background:#fff;color:#000"><span>0</span></div></div>
<div class="cell" style="left:1099px;width:60px"><div class="h" style="background:#d9a07a;color:#fff"><span>Button 14</span></div><div class="v" style="background:#fff;color:#000"><span>0</span></div></div>
<div class="cell" style="left:1158px;width:60px"><div class="h" style="background:#d9a07a;color:#fff"><span>Button 15</span></div><div class="v" style="background:#fff;color:#000"><span>0</span></div></div>
</div>
<div class="row" style="top:125px">
<div class="cell" style="left:0px;width:80px"><div class="h" style="background:#40e47c;color:#000"><span>Transfer</span></div><div class="v" style="background:#40e47c;color:#000"><span>238</span></div></div>
<div class="cell" style="left:79px;width:24px"><div class="h" style="background:#808040;color:#fff"><span>F</span></div><div class="v" style="background:#fff;color:#000"><span>S</span></div></div>
<div class="cell" style="left:106px;width:64px"><div class="h" style="background:#400040;color:#fff"><span>Interrupt</span></div><div class="v" style="background:#fff;color:#000"><span>IN</span></div></div>
<div class="cell" style="left:169px;width:40px"><div class="h" style="background:#000040;color:#fff"><span>ADDR</span></div><div class="v" style="background:#fff;color:#000"><span>30</span></div></div>
<div class="cell" style="left:208px;width:40px"><div class="h" style="background:#00ff80;color:#000"><span>ENDP</span></div><div class="v" style="background:#fff;color:#000"><span>2</span></div></div>
<div class="cell" style="left:251px;width:58px"><div class="h" style="background:#7a5944;color:#fff"><span>Report ID</span></div><div class="v" style="background:#fff;color:#000"><span>0x02</span></div></div>
<div class="cell" style="left:312px;width:81px"><div class="h" style="background:#7a5944;color:#fff"><span class=u>Usage Page</span></div><div class="v" style="background:#7a5944;color:#fff"><span>Button (0x09)</span></div></div>
<svg style="left:313.4px;top:1px" width="5" height="7" viewBox="0 0 5 7"><path d="M0 0 L3.6 3 L0 6 Z" fill="#fff"/></svg>
<div class="cell" style="left:396px;width:53px"><div class="h" style="background:#d9a07a;color:#fff"><span>Button 1</span></div><div class="v" style="background:#fff;color:#000"><span>0</span></div></div>
<div class="cell" style="left:448px;width:53px"><div class="h" style="background:#d9a07a;color:#fff"><span>Button 2</span></div><div class="v" style="background:#fff;color:#000"><span>0</span></div></div>
<div class="cell" style="left:500px;width:53px"><div class="h" style="background:#d9a07a;color:#fff"><span>Button 3</span></div><div class="v" style="background:#fff;color:#000"><span>0</span></div></div>
<div class="cell" style="left:552px;width:53px"><div class="h" style="background:#d9a07a;color:#fff"><span>Button 4</span></div><div class="v" style="background:#fff;color:#000"><span>0</span></div></div>
<div class="cell" style="left:604px;width:53px"><div class="h" style="background:#d9a07a;color:#fff"><span>Button 5</span></div><div class="v" style="background:#fff;color:#000"><span>0</span></div></div>
<div class="cell" style="left:656px;width:53px"><div class="h" style="background:#d9a07a;color:#fff"><span>Button 6</span></div><div class="v" style="background:#fff;color:#000"><span>0</span></div></div>
<div class="cell" style="left:708px;width:53px"><div class="h" style="background:#d9a07a;color:#fff"><span>Button 7</span></div><div class="v" style="background:#fff;color:#000"><span>0</span></div></div>
<div class="cell" style="left:760px;width:53px"><div class="h" style="background:#d9a07a;color:#fff"><span>Button 8</span></div><div class="v" style="background:#fff;color:#000"><span>0</span></div></div>
<div class="cell" style="left:812px;width:53px"><div class="h" style="background:#d9a07a;color:#fff"><span>Button 9</span></div><div class="v" style="background:#fff;color:#000"><span>0</span></div></div>
<div class="cell" style="left:864px;width:60px"><div class="h" style="background:#d9a07a;color:#fff"><span>Button 10</span></div><div class="v" style="background:#fff;color:#000"><span>0</span></div></div>
<div class="cell" style="left:923px;width:59px"><div class="h" style="background:#d9a07a;color:#fff"><span>Button 11</span></div><div class="v" style="background:#fff;color:#000"><span>0</span></div></div>
<div class="cell" style="left:981px;width:60px"><div class="h" style="background:#d9a07a;color:#fff"><span>Button 12</span></div><div class="v" style="background:#fff;color:#000"><span>0</span></div></div>
<div class="cell" style="left:1040px;width:60px"><div class="h" style="background:#d9a07a;color:#fff"><span>Button 13</span></div><div class="v" style="background:#fff;color:#000"><span>0</span></div></div>
<div class="cell" style="left:1099px;width:60px"><div class="h" style="background:#d9a07a;color:#fff"><span>Button 14</span></div><div class="v" style="background:#fff;color:#000"><span>0</span></div></div>
<div class="cell" style="left:1158px;width:60px"><div class="h" style="background:#d9a07a;color:#fff"><span>Button 15</span></div><div class="v" style="background:#fff;color:#000"><span>0</span></div></div>
</div>
<div class="row" style="top:164px">
<div class="cell" style="left:0px;width:80px"><div class="h" style="background:#40e47c;color:#000"><span>Transfer</span></div><div class="v" style="background:#40e47c;color:#000"><span>239</span></div></div>
<div class="cell" style="left:79px;width:24px"><div class="h" style="background:#808040;color:#fff"><span>F</span></div><div class="v" style="background:#fff;color:#000"><span>S</span></div></div>
<div class="cell" style="left:106px;width:64px"><div class="h" style="background:#400040;color:#fff"><span>Interrupt</span></div><div class="v" style="background:#fff;color:#000"><span>IN</span></div></div>
<div class="cell" style="left:169px;width:40px"><div class="h" style="background:#000040;color:#fff"><span>ADDR</span></div><div class="v" style="background:#fff;color:#000"><span>30</span></div></div>
<div class="cell" style="left:208px;width:40px"><div class="h" style="background:#00ff80;color:#000"><span>ENDP</span></div><div class="v" style="background:#fff;color:#000"><span>2</span></div></div>
<div class="cell" style="left:251px;width:58px"><div class="h" style="background:#7a5944;color:#fff"><span>Report ID</span></div><div class="v" style="background:#fff;color:#000"><span>0x02</span></div></div>
<div class="cell" style="left:312px;width:81px"><div class="h" style="background:#7a5944;color:#fff"><span class=u>Usage Page</span></div><div class="v" style="background:#7a5944;color:#fff"><span>Button (0x09)</span></div></div>
<svg style="left:313.4px;top:1px" width="5" height="7" viewBox="0 0 5 7"><path d="M0 0 L3.6 3 L0 6 Z" fill="#fff"/></svg>
<div class="cell" style="left:396px;width:53px"><div class="h" style="background:#d9a07a;color:#fff"><span>Button 1</span></div><div class="v" style="background:#fff;color:#000"><span>0</span></div></div>
<div class="cell" style="left:448px;width:53px"><div class="h" style="background:#d9a07a;color:#fff"><span>Button 2</span></div><div class="v" style="background:#fff;color:#000"><span>0</span></div></div>
<div class="cell" style="left:500px;width:53px"><div class="h" style="background:#d9a07a;color:#fff"><span>Button 3</span></div><div class="v" style="background:#fff;color:#000"><span>0</span></div></div>
<div class="cell" style="left:552px;width:53px"><div class="h" style="background:#d9a07a;color:#fff"><span>Button 4</span></div><div class="v" style="background:#fff;color:#000"><span>0</span></div></div>
<div class="cell" style="left:604px;width:53px"><div class="h" style="background:#d9a07a;color:#fff"><span>Button 5</span></div><div class="v" style="background:#fff;color:#000"><span>0</span></div></div>
<div class="cell" style="left:656px;width:53px"><div class="h" style="background:#d9a07a;color:#fff"><span>Button 6</span></div><div class="v" style="background:#fff;color:#000"><span>0</span></div></div>
<div class="cell" style="left:708px;width:53px"><div class="h" style="background:#d9a07a;color:#fff"><span>Button 7</span></div><div class="v" style="background:#fff;color:#000"><span>0</span></div></div>
<div class="cell" style="left:760px;width:53px"><div class="h" style="background:#d9a07a;color:#fff"><span>Button 8</span></div><div class="v" style="background:#fff;color:#000"><span>0</span></div></div>
<div class="cell" style="left:812px;width:53px"><div class="h" style="background:#d9a07a;color:#fff"><span>Button 9</span></div><div class="v" style="background:#fff;color:#000"><span>0</span></div></div>
<div class="cell" style="left:864px;width:60px"><div class="h" style="background:#d9a07a;color:#fff"><span>Button 10</span></div><div class="v" style="background:#fff;color:#000"><span>0</span></div></div>
<div class="cell" style="left:923px;width:59px"><div class="h" style="background:#d9a07a;color:#fff"><span>Button 11</span></div><div class="v" style="background:#fff;color:#000"><span>0</span></div></div>
<div class="cell" style="left:981px;width:60px"><div class="h" style="background:#d9a07a;color:#fff"><span>Button 12</span></div><div class="v" style="background:#fff;color:#000"><span>0</span></div></div>
<div class="cell" style="left:1040px;width:60px"><div class="h" style="background:#d9a07a;color:#fff"><span>Button 13</span></div><div class="v" style="background:#fff;color:#000"><span>0</span></div></div>
<div class="cell" style="left:1099px;width:60px"><div class="h" style="background:#d9a07a;color:#fff"><span>Button 14</span></div><div class="v" style="background:#fff;color:#000"><span>0</span></div></div>
<div class="cell" style="left:1158px;width:60px"><div class="h" style="background:#d9a07a;color:#fff"><span>Button 15</span></div><div class="v" style="background:#fff;color:#000"><span>0</span></div></div>
</div>
<div class="row" style="top:203px">
<div class="cell" style="left:0px;width:80px"><div class="h" style="background:#40e47c;color:#000"><span>Transfer</span></div><div class="v" style="background:#40e47c;color:#000"><span>240</span></div></div>
<div class="cell" style="left:79px;width:24px"><div class="h" style="background:#808040;color:#fff"><span>F</span></div><div class="v" style="background:#fff;color:#000"><span>S</span></div></div>
<div class="cell" style="left:106px;width:64px"><div class="h" style="background:#400040;color:#fff"><span>Interrupt</span></div><div class="v" style="background:#fff;color:#000"><span>IN</span></div></div>
<div class="cell" style="left:169px;width:40px"><div class="h" style="background:#000040;color:#fff"><span>ADDR</span></div><div class="v" style="background:#fff;color:#000"><span>30</span></div></div>
<div class="cell" style="left:208px;width:40px"><div class="h" style="background:#00ff80;color:#000"><span>ENDP</span></div><div class="v" style="background:#fff;color:#000"><span>2</span></div></div>
<div class="cell" style="left:251px;width:58px"><div class="h" style="background:#7a5944;color:#fff"><span>Report ID</span></div><div class="v" style="background:#fff;color:#000"><span>0x02</span></div></div>
<div class="cell" style="left:312px;width:81px"><div class="h" style="background:#7a5944;color:#fff"><span class=u>Usage Page</span></div><div class="v" style="background:#7a5944;color:#fff"><span>Button (0x09)</span></div></div>
<svg style="left:313.4px;top:1px" width="5" height="7" viewBox="0 0 5 7"><path d="M0 0 L3.6 3 L0 6 Z" fill="#fff"/></svg>
<div class="cell" style="left:396px;width:53px"><div class="h" style="background:#d9a07a;color:#fff"><span>Button 1</span></div><div class="v" style="background:#fff;color:#000"><span>0</span></div></div>
<div class="cell" style="left:448px;width:53px"><div class="h" style="background:#d9a07a;color:#fff"><span>Button 2</span></div><div class="v" style="background:#fff;color:#000"><span>0</span></div></div>
<div class="cell" style="left:500px;width:53px"><div class="h" style="background:#d9a07a;color:#fff"><span>Button 3</span></div><div class="v" style="background:#fff;color:#000"><span>0</span></div></div>
<div class="cell" style="left:552px;width:53px"><div class="h" style="background:#d9a07a;color:#fff"><span>Button 4</span></div><div class="v" style="background:#fff;color:#000"><span>0</span></div></div>
<div class="cell" style="left:604px;width:53px"><div class="h" style="background:#d9a07a;color:#fff"><span>Button 5</span></div><div class="v" style="background:#fff;color:#000"><span>0</span></div></div>
<div class="cell" style="left:656px;width:53px"><div class="h" style="background:#d9a07a;color:#fff"><span>Button 6</span></div><div class="v" style="background:#fff;color:#000"><span>0</span></div></div>
<div class="cell" style="left:708px;width:53px"><div class="h" style="background:#d9a07a;color:#fff"><span>Button 7</span></div><div class="v" style="background:#fff;color:#000"><span>0</span></div></div>
<div class="cell" style="left:760px;width:53px"><div class="h" style="background:#d9a07a;color:#fff"><span>Button 8</span></div><div class="v" style="background:#fff;color:#000"><span>0</span></div></div>
<div class="cell" style="left:812px;width:53px"><div class="h" style="background:#d9a07a;color:#fff"><span>Button 9</span></div><div class="v" style="background:#fff;color:#000"><span>0</span></div></div>
<div class="cell" style="left:864px;width:60px"><div class="h" style="background:#d9a07a;color:#fff"><span>Button 10</span></div><div class="v" style="background:#fff;color:#000"><span>0</span></div></div>
<div class="cell" style="left:923px;width:59px"><div class="h" style="background:#d9a07a;color:#fff"><span>Button 11</span></div><div class="v" style="background:#fff;color:#000"><span>0</span></div></div>
<div class="cell" style="left:981px;width:60px"><div class="h" style="background:#d9a07a;color:#fff"><span>Button 12</span></div><div class="v" style="background:#fff;color:#000"><span>0</span></div></div>
<div class="cell" style="left:1040px;width:60px"><div class="h" style="background:#d9a07a;color:#fff"><span>Button 13</span></div><div class="v" style="background:#fff;color:#000"><span>0</span></div></div>
<div class="cell" style="left:1099px;width:60px"><div class="h" style="background:#d9a07a;color:#fff"><span>Button 14</span></div><div class="v" style="background:#fff;color:#000"><span>0</span></div></div>
<div class="cell" style="left:1158px;width:60px"><div class="h" style="background:#d9a07a;color:#fff"><span>Button 15</span></div><div class="v" style="background:#fff;color:#000"><span>0</span></div></div>
</div>
<div class="row" style="top:242px">
<div class="cell" style="left:0px;width:80px"><div class="h" style="background:#40e47c;color:#000"><span>Transfer</span></div><div class="v" style="background:#40e47c;color:#000"><span>241</span></div></div>
<div class="cell" style="left:79px;width:24px"><div class="h" style="background:#808040;color:#fff"><span>F</span></div><div class="v" style="background:#fff;color:#000"><span>S</span></div></div>
<div class="cell" style="left:106px;width:64px"><div class="h" style="background:#400040;color:#fff"><span>Interrupt</span></div><div class="v" style="background:#fff;color:#000"><span>IN</span></div></div>
<div class="cell" style="left:169px;width:40px"><div class="h" style="background:#000040;color:#fff"><span>ADDR</span></div><div class="v" style="background:#fff;color:#000"><span>30</span></div></div>
<div class="cell" style="left:208px;width:40px"><div class="h" style="background:#00ff80;color:#000"><span>ENDP</span></div><div class="v" style="background:#fff;color:#000"><span>2</span></div></div>
<div class="cell" style="left:251px;width:58px"><div class="h" style="background:#7a5944;color:#fff"><span>Report ID</span></div><div class="v" style="background:#fff;color:#000"><span>0x02</span></div></div>
<div class="cell" style="left:312px;width:81px"><div class="h" style="background:#7a5944;color:#fff"><span class=u>Usage Page</span></div><div class="v" style="background:#7a5944;color:#fff"><span>Button (0x09)</span></div></div>
<svg style="left:313.4px;top:1px" width="5" height="7" viewBox="0 0 5 7"><path d="M0 0 L3.6 3 L0 6 Z" fill="#fff"/></svg>
<div class="cell" style="left:396px;width:53px"><div class="h" style="background:#d9a07a;color:#fff"><span>Button 1</span></div><div class="v" style="background:#fff;color:#000"><span>0</span></div></div>
<div class="cell" style="left:448px;width:53px"><div class="h" style="background:#d9a07a;color:#fff"><span>Button 2</span></div><div class="v" style="background:#fff;color:#000"><span>0</span></div></div>
<div class="cell" style="left:500px;width:53px"><div class="h" style="background:#d9a07a;color:#fff"><span>Button 3</span></div><div class="v" style="background:#fff;color:#000"><span>0</span></div></div>
<div class="cell" style="left:552px;width:53px"><div class="h" style="background:#d9a07a;color:#fff"><span>Button 4</span></div><div class="v" style="background:#fff;color:#000"><span>0</span></div></div>
<div class="cell" style="left:604px;width:53px"><div class="h" style="background:#d9a07a;color:#fff"><span>Button 5</span></div><div class="v" style="background:#fff;color:#000"><span>0</span></div></div>
<div class="cell" style="left:656px;width:53px"><div class="h" style="background:#d9a07a;color:#fff"><span>Button 6</span></div><div class="v" style="background:#fff;color:#000"><span>0</span></div></div>
<div class="cell" style="left:708px;width:53px"><div class="h" style="background:#d9a07a;color:#fff"><span>Button 7</span></div><div class="v" style="background:#fff;color:#000"><span>0</span></div></div>
<div class="cell" style="left:760px;width:53px"><div class="h" style="background:#d9a07a;color:#fff"><span>Button 8</span></div><div class="v" style="background:#fff;color:#000"><span>0</span></div></div>
<div class="cell" style="left:812px;width:53px"><div class="h" style="background:#d9a07a;color:#fff"><span>Button 9</span></div><div class="v" style="background:#fff;color:#000"><span>0</span></div></div>
<div class="cell" style="left:864px;width:60px"><div class="h" style="background:#d9a07a;color:#fff"><span>Button 10</span></div><div class="v" style="background:#fff;color:#000"><span>0</span></div></div>
<div class="cell" style="left:923px;width:59px"><div class="h" style="background:#d9a07a;color:#fff"><span>Button 11</span></div><div class="v" style="background:#fff;color:#000"><span>0</span></div></div>
<div class="cell" style="left:981px;width:60px"><div class="h" style="background:#d9a07a;color:#fff"><span>Button 12</span></div><div class="v" style="background:#fff;color:#000"><span>0</span></div></div>
<div class="cell" style="left:1040px;width:60px"><div class="h" style="background:#d9a07a;color:#fff"><span>Button 13</span></div><div class="v" style="background:#fff;color:#000"><span>0</span></div></div>
<div class="cell" style="left:1099px;width:60px"><div class="h" style="background:#d9a07a;color:#fff"><span>Button 14</span></div><div class="v" style="background:#fff;color:#000"><span>0</span></div></div>
<div class="cell" style="left:1158px;width:60px"><div class="h" style="background:#d9a07a;color:#fff"><span>Button 15</span></div><div class="v" style="background:#fff;color:#000"><span>0</span></div></div>
</div>
<div class="row" style="top:281px">
<div class="cell" style="left:0px;width:80px"><div class="h" style="background:#40e47c;color:#000"><span>Transfer</span></div><div class="v" style="background:#40e47c;color:#000"><span>242</span></div></div>
<div class="cell" style="left:79px;width:24px"><div class="h" style="background:#808040;color:#fff"><span>F</span></div><div class="v" style="background:#fff;color:#000"><span>S</span></div></div>
<div class="cell" style="left:106px;width:64px"><div class="h" style="background:#400040;color:#fff"><span>Interrupt</span></div><div class="v" style="background:#fff;color:#000"><span>IN</span></div></div>
<div class="cell" style="left:169px;width:40px"><div class="h" style="background:#000040;color:#fff"><span>ADDR</span></div><div class="v" style="background:#fff;color:#000"><span>30</span></div></div>
<div class="cell" style="left:208px;width:40px"><div class="h" style="background:#00ff80;color:#000"><span>ENDP</span></div><div class="v" style="background:#fff;color:#000"><span>2</span></div></div>
<div class="cell" style="left:251px;width:58px"><div class="h" style="background:#7a5944;color:#fff"><span>Report ID</span></div><div class="v" style="background:#fff;color:#000"><span>0x02</span></div></div>
<div class="cell" style="left:312px;width:81px"><div class="h" style="background:#7a5944;color:#fff"><span class=u>Usage Page</span></div><div class="v" style="background:#7a5944;color:#fff"><span>Button (0x09)</span></div></div>
<svg style="left:313.4px;top:1px" width="5" height="7" viewBox="0 0 5 7"><path d="M0 0 L3.6 3 L0 6 Z" fill="#fff"/></svg>
<div class="cell" style="left:396px;width:53px"><div class="h" style="background:#d9a07a;color:#fff"><span>Button 1</span></div><div class="v" style="background:#fff;color:#000"><span>0</span></div></div>
<div class="cell" style="left:448px;width:53px"><div class="h" style="background:#d9a07a;color:#fff"><span>Button 2</span></div><div class="v" style="background:#fff;color:#000"><span>0</span></div></div>
<div class="cell" style="left:500px;width:53px"><div class="h" style="background:#d9a07a;color:#fff"><span>Button 3</span></div><div class="v" style="background:#fff;color:#000"><span>0</span></div></div>
<div class="cell" style="left:552px;width:53px"><div class="h" style="background:#d9a07a;color:#fff"><span>Button 4</span></div><div class="v" style="background:#fff;color:#000"><span>0</span></div></div>
<div class="cell" style="left:604px;width:53px"><div class="h" style="background:#d9a07a;color:#fff"><span>Button 5</span></div><div class="v" style="background:#fff;color:#000"><span>0</span></div></div>
<div class="cell" style="left:656px;width:53px"><div class="h" style="background:#d9a07a;color:#fff"><span>Button 6</span></div><div class="v" style="background:#fff;color:#000"><span>0</span></div></div>
<div class="cell" style="left:708px;width:53px"><div class="h" style="background:#d9a07a;color:#fff"><span>Button 7</span></div><div class="v" style="background:#fff;color:#000"><span>0</span></div></div>
<div class="cell" style="left:760px;width:53px"><div class="h" style="background:#d9a07a;color:#fff"><span>Button 8</span></div><div class="v" style="background:#fff;color:#000"><span>0</span></div></div>
<div class="cell" style="left:812px;width:53px"><div class="h" style="background:#d9a07a;color:#fff"><span>Button 9</span></div><div class="v" style="background:#fff;color:#000"><span>0</span></div></div>
<div class="cell" style="left:864px;width:60px"><div class="h" style="background:#d9a07a;color:#fff"><span>Button 10</span></div><div class="v" style="background:#fff;color:#000"><span>0</span></div></div>
<div class="cell" style="left:923px;width:59px"><div class="h" style="background:#d9a07a;color:#fff"><span>Button 11</span></div><div class="v" style="background:#fff;color:#000"><span>0</span></div></div>
<div class="cell" style="left:981px;width:60px"><div class="h" style="background:#d9a07a;color:#fff"><span>Button 12</span></div><div class="v" style="background:#fff;color:#000"><span>0</span></div></div>
<div class="cell" style="left:1040px;width:60px"><div class="h" style="background:#d9a07a;color:#fff"><span>Button 13</span></div><div class="v" style="background:#fff;color:#000"><span>0</span></div></div>
<div class="cell" style="left:1099px;width:60px"><div class="h" style="background:#d9a07a;color:#fff"><span>Button 14</span></div><div class="v" style="background:#fff;color:#000"><span>0</span></div></div>
<div class="cell" style="left:1158px;width:60px"><div class="h" style="background:#d9a07a;color:#fff"><span>Button 15</span></div><div class="v" style="background:#fff;color:#000"><span>0</span></div></div>
</div>
<div class="row" style="top:320px">
<div class="cell" style="left:0px;width:80px"><div class="h" style="background:#40e47c;color:#000"><span>Transfer</span></div><div class="v" style="background:#40e47c;color:#000"><span>243</span></div></div>
<div class="cell" style="left:79px;width:24px"><div class="h" style="background:#808040;color:#fff"><span>F</span></div><div class="v" style="background:#fff;color:#000"><span>S</span></div></div>
<div class="cell" style="left:106px;width:64px"><div class="h" style="background:#400040;color:#fff"><span>Interrupt</span></div><div class="v" style="background:#fff;color:#000"><span>IN</span></div></div>
<div class="cell" style="left:169px;width:40px"><div class="h" style="background:#000040;color:#fff"><span>ADDR</span></div><div class="v" style="background:#fff;color:#000"><span>30</span></div></div>
<div class="cell" style="left:208px;width:40px"><div class="h" style="background:#00ff80;color:#000"><span>ENDP</span></div><div class="v" style="background:#fff;color:#000"><span>2</span></div></div>
<div class="cell" style="left:251px;width:58px"><div class="h" style="background:#7a5944;color:#fff"><span>Report ID</span></div><div class="v" style="background:#fff;color:#000"><span>0x02</span></div></div>
<div class="cell" style="left:312px;width:81px"><div class="h" style="background:#7a5944;color:#fff"><span class=u>Usage Page</span></div><div class="v" style="background:#7a5944;color:#fff"><span>Button (0x09)</span></div></div>
<svg style="left:313.4px;top:1px" width="5" height="7" viewBox="0 0 5 7"><path d="M0 0 L3.6 3 L0 6 Z" fill="#fff"/></svg>
<div class="cell" style="left:396px;width:53px"><div class="h" style="background:#d9a07a;color:#fff"><span>Button 1</span></div><div class="v" style="background:#fff;color:#000"><span>0</span></div></div>
<div class="cell" style="left:448px;width:53px"><div class="h" style="background:#d9a07a;color:#fff"><span>Button 2</span></div><div class="v" style="background:#fff;color:#000"><span>0</span></div></div>
<div class="cell" style="left:500px;width:53px"><div class="h" style="background:#d9a07a;color:#fff"><span>Button 3</span></div><div class="v" style="background:#fff;color:#000"><span>0</span></div></div>
<div class="cell" style="left:552px;width:53px"><div class="h" style="background:#d9a07a;color:#fff"><span>Button 4</span></div><div class="v" style="background:#fff;color:#000"><span>0</span></div></div>
<div class="cell" style="left:604px;width:53px"><div class="h" style="background:#d9a07a;color:#fff"><span>Button 5</span></div><div class="v" style="background:#fff;color:#000"><span>0</span></div></div>
<div class="cell" style="left:656px;width:53px"><div class="h" style="background:#d9a07a;color:#fff"><span>Button 6</span></div><div class="v" style="background:#fff;color:#000"><span>0</span></div></div>
<div class="cell" style="left:708px;width:53px"><div class="h" style="background:#d9a07a;color:#fff"><span>Button 7</span></div><div class="v" style="background:#fff;color:#000"><span>0</span></div></div>
<div class="cell" style="left:760px;width:53px"><div class="h" style="background:#d9a07a;color:#fff"><span>Button 8</span></div><div class="v" style="background:#fff;color:#000"><span>0</span></div></div>
<div class="cell" style="left:812px;width:53px"><div class="h" style="background:#d9a07a;color:#fff"><span>Button 9</span></div><div class="v" style="background:#fff;color:#000"><span>0</span></div></div>
<div class="cell" style="left:864px;width:60px"><div class="h" style="background:#d9a07a;color:#fff"><span>Button 10</span></div><div class="v" style="background:#fff;color:#000"><span>0</span></div></div>
<div class="cell" style="left:923px;width:59px"><div class="h" style="background:#d9a07a;color:#fff"><span>Button 11</span></div><div class="v" style="background:#fff;color:#000"><span>0</span></div></div>
<div class="cell" style="left:981px;width:60px"><div class="h" style="background:#d9a07a;color:#fff"><span>Button 12</span></div><div class="v" style="background:#fff;color:#000"><span>0</span></div></div>
<div class="cell" style="left:1040px;width:60px"><div class="h" style="background:#d9a07a;color:#fff"><span>Button 13</span></div><div class="v" style="background:#fff;color:#000"><span>0</span></div></div>
<div class="cell" style="left:1099px;width:60px"><div class="h" style="background:#d9a07a;color:#fff"><span>Button 14</span></div><div class="v" style="background:#fff;color:#000"><span>0</span></div></div>
<div class="cell" style="left:1158px;width:60px"><div class="h" style="background:#d9a07a;color:#fff"><span>Button 15</span></div><div class="v" style="background:#fff;color:#000"><span>0</span></div></div>
</div>
<div class="row" style="top:359px">
<div class="cell" style="left:0px;width:80px"><div class="h" style="background:#40e47c;color:#000"><span>Transfer</span></div><div class="v" style="background:#40e47c;color:#000"><span>244</span></div></div>
<div class="cell" style="left:79px;width:24px"><div class="h" style="background:#808040;color:#fff"><span>F</span></div><div class="v" style="background:#fff;color:#000"><span>S</span></div></div>
<div class="cell" style="left:106px;width:64px"><div class="h" style="background:#400040;color:#fff"><span>Interrupt</span></div><div class="v" style="background:#fff;color:#000"><span>IN</span></div></div>
<div class="cell" style="left:169px;width:40px"><div class="h" style="background:#000040;color:#fff"><span>ADDR</span></div><div class="v" style="background:#fff;color:#000"><span>30</span></div></div>
<div class="cell" style="left:208px;width:40px"><div class="h" style="background:#00ff80;color:#000"><span>ENDP</span></div><div class="v" style="background:#fff;color:#000"><span>2</span></div></div>
<div class="cell" style="left:251px;width:58px"><div class="h" style="background:#7a5944;color:#fff"><span>Report ID</span></div><div class="v" style="background:#fff;color:#000"><span>0x02</span></div></div>
<div class="cell" style="left:312px;width:81px"><div class="h" style="background:#7a5944;color:#fff"><span class=u>Usage Page</span></div><div class="v" style="background:#7a5944;color:#fff"><span>Button (0x09)</span></div></div>
<svg style="left:313.4px;top:1px" width="5" height="7" viewBox="0 0 5 7"><path d="M0 0 L3.6 3 L0 6 Z" fill="#fff"/></svg>
<div class="cell" style="left:396px;width:53px"><div class="h" style="background:#d9a07a;color:#fff"><span>Button 1</span></div><div class="v" style="background:#fff;color:#000"><span>0</span></div></div>
<div class="cell" style="left:448px;width:53px"><div class="h" style="background:#d9a07a;color:#fff"><span>Button 2</span></div><div class="v" style="background:#fff;color:#000"><span>0</span></div></div>
<div class="cell" style="left:500px;width:53px"><div class="h" style="background:#d9a07a;color:#fff"><span>Button 3</span></div><div class="v" style="background:#fff;color:#000"><span>0</span></div></div>
<div class="cell" style="left:552px;width:53px"><div class="h" style="background:#d9a07a;color:#fff"><span>Button 4</span></div><div class="v" style="background:#fff;color:#000"><span>0</span></div></div>
<div class="cell" style="left:604px;width:53px"><div class="h" style="background:#d9a07a;color:#fff"><span>Button 5</span></div><div class="v" style="background:#fff;color:#000"><span>0</span></div></div>
<div class="cell" style="left:656px;width:53px"><div class="h" style="background:#d9a07a;color:#fff"><span>Button 6</span></div><div class="v" style="background:#fff;color:#000"><span>0</span></div></div>
<div class="cell" style="left:708px;width:53px"><div class="h" style="background:#d9a07a;color:#fff"><span>Button 7</span></div><div class="v" style="background:#fff;color:#000"><span>0</span></div></div>
<div class="cell" style="left:760px;width:53px"><div class="h" style="background:#d9a07a;color:#fff"><span>Button 8</span></div><div class="v" style="background:#fff;color:#000"><span>0</span></div></div>
<div class="cell" style="left:812px;width:53px"><div class="h" style="background:#d9a07a;color:#fff"><span>Button 9</span></div><div class="v" style="background:#fff;color:#000"><span>0</span></div></div>
<div class="cell" style="left:864px;width:60px"><div class="h" style="background:#d9a07a;color:#fff"><span>Button 10</span></div><div class="v" style="background:#fff;color:#000"><span>0</span></div></div>
<div class="cell" style="left:923px;width:59px"><div class="h" style="background:#d9a07a;color:#fff"><span>Button 11</span></div><div class="v" style="background:#fff;color:#000"><span>0</span></div></div>
<div class="cell" style="left:981px;width:60px"><div class="h" style="background:#d9a07a;color:#fff"><span>Button 12</span></div><div class="v" style="background:#fff;color:#000"><span>0</span></div></div>
<div class="cell" style="left:1040px;width:60px"><div class="h" style="background:#d9a07a;color:#fff"><span>Button 13</span></div><div class="v" style="background:#fff;color:#000"><span>0</span></div></div>
<div class="cell" style="left:1099px;width:60px"><div class="h" style="background:#d9a07a;color:#fff"><span>Button 14</span></div><div class="v" style="background:#fff;color:#000"><span>0</span></div></div>
<div class="cell" style="left:1158px;width:60px"><div class="h" style="background:#d9a07a;color:#fff"><span>Button 15</span></div><div class="v" style="background:#fff;color:#000"><span>0</span></div></div>
</div>
<div class="row" style="top:398px">
<div class="cell" style="left:0px;width:80px"><div class="h" style="background:#40e47c;color:#000"><span>Transfer</span></div><div class="v" style="background:#40e47c;color:#000"><span>245</span></div></div>
<div class="cell" style="left:79px;width:24px"><div class="h" style="background:#808040;color:#fff"><span>F</span></div><div class="v" style="background:#fff;color:#000"><span>S</span></div></div>
<div class="cell" style="left:106px;width:64px"><div class="h" style="background:#400040;color:#fff"><span>Interrupt</span></div><div class="v" style="background:#fff;color:#000"><span>IN</span></div></div>
<div class="cell" style="left:169px;width:40px"><div class="h" style="background:#000040;color:#fff"><span>ADDR</span></div><div class="v" style="background:#fff;color:#000"><span>30</span></div></div>
<div class="cell" style="left:208px;width:40px"><div class="h" style="background:#00ff80;color:#000"><span>ENDP</span></div><div class="v" style="background:#fff;color:#000"><span>2</span></div></div>
<div class="cell" style="left:251px;width:58px"><div class="h" style="background:#7a5944;color:#fff"><span>Report ID</span></div><div class="v" style="background:#fff;color:#000"><span>0x02</span></div></div>
<div class="cell" style="left:312px;width:81px"><div class="h" style="background:#7a5944;color:#fff"><span class=u>Usage Page</span></div><div class="v" style="background:#7a5944;color:#fff"><span>Button (0x09)</span></div></div>
<svg style="left:313.4px;top:1px" width="5" height="7" viewBox="0 0 5 7"><path d="M0 0 L3.6 3 L0 6 Z" fill="#fff"/></svg>
<div class="cell" style="left:396px;width:53px"><div class="h" style="background:#d9a07a;color:#fff"><span>Button 1</span></div><div class="v" style="background:#fff;color:#000"><span>0</span></div></div>
<div class="cell" style="left:448px;width:53px"><div class="h" style="background:#d9a07a;color:#fff"><span>Button 2</span></div><div class="v" style="background:#fff;color:#000"><span>0</span></div></div>
<div class="cell" style="left:500px;width:53px"><div class="h" style="background:#d9a07a;color:#fff"><span>Button 3</span></div><div class="v" style="background:#fff;color:#000"><span>0</span></div></div>
<div class="cell" style="left:552px;width:53px"><div class="h" style="background:#d9a07a;color:#fff"><span>Button 4</span></div><div class="v" style="background:#fff;color:#000"><span>0</span></div></div>
<div class="cell" style="left:604px;width:53px"><div class="h" style="background:#d9a07a;color:#fff"><span>Button 5</span></div><div class="v" style="background:#fff;color:#000"><span>0</span></div></div>
<div class="cell" style="left:656px;width:53px"><div class="h" style="background:#d9a07a;color:#fff"><span>Button 6</span></div><div class="v" style="background:#fff;color:#000"><span>0</span></div></div>
<div class="cell" style="left:708px;width:53px"><div class="h" style="background:#d9a07a;color:#fff"><span>Button 7</span></div><div class="v" style="background:#fff;color:#000"><span>0</span></div></div>
<div class="cell" style="left:760px;width:53px"><div class="h" style="background:#d9a07a;color:#fff"><span>Button 8</span></div><div class="v" style="background:#fff;color:#000"><span>0</span></div></div>
<div class="cell" style="left:812px;width:53px"><div class="h" style="background:#d9a07a;color:#fff"><span>Button 9</span></div><div class="v" style="background:#fff;color:#000"><span>0</span></div></div>
<div class="cell" style="left:864px;width:60px"><div class="h" style="background:#d9a07a;color:#fff"><span>Button 10</span></div><div class="v" style="background:#fff;color:#000"><span>0</span></div></div>
<div class="cell" style="left:923px;width:59px"><div class="h" style="background:#d9a07a;color:#fff"><span>Button 11</span></div><div class="v" style="background:#fff;color:#000"><span>0</span></div></div>
<div class="cell" style="left:981px;width:60px"><div class="h" style="background:#d9a07a;color:#fff"><span>Button 12</span></div><div class="v" style="background:#fff;color:#000"><span>0</span></div></div>
<div class="cell" style="left:1040px;width:60px"><div class="h" style="background:#d9a07a;color:#fff"><span>Button 13</span></div><div class="v" style="background:#fff;color:#000"><span>0</span></div></div>
<div class="cell" style="left:1099px;width:60px"><div class="h" style="background:#d9a07a;color:#fff"><span>Button 14</span></div><div class="v" style="background:#fff;color:#000"><span>0</span></div></div>
<div class="cell" style="left:1158px;width:60px"><div class="h" style="background:#d9a07a;color:#fff"><span>Button 15</span></div><div class="v" style="background:#fff;color:#000"><span>0</span></div></div>
</div>
</div>
<svg style="left:3px;top:18px" width="5" height="12" viewBox="0 0 5 12"><path d="M0 0 L4.5 2.5 V9.5 L0 12 Z" fill="#e0a020"/></svg>
</div>
<div style="left:1199px;top:140px;width:1px;height:421px;background:#000;"></div>
<div style="left:1200px;top:132px;width:18px;height:429px;background:#e9e9e9;background-image:linear-gradient(45deg,#fff 25%,transparent 25%,transparent 75%,#fff 75%),linear-gradient(45deg,#fff 25%,transparent 25%,transparent 75%,#fff 75%);background-size:2px 2px;background-position:0 0,1px 1px;background-color:#d4d4d4;"></div>
<div class="sb" style="left:1200px;top:132px;width:17px;height:17px">
<svg style="left:0;top:0" width="17" height="17" viewBox="0 0 17 17"><path d="M3.5 9.5 L7.3 5.5 L11.1 9.5 Z" fill="#000"/></svg>
</div>
<div class="sb" style="left:1200px;top:543px;width:17px;height:17px">
<svg style="left:0;top:0" width="17" height="17" viewBox="0 0 17 17"><path d="M3.5 5.9 L7.3 9.9 L11.1 5.9 Z" fill="#000"/></svg>
</div>
<div class="sb" style="left:1200px;top:353px;width:17px;height:8px">
</div>
<div style="left:4px;top:561px;width:1195px;height:16px;background:#e9e9e9;background-image:linear-gradient(45deg,#fff 25%,transparent 25%,transparent 75%,#fff 75%),linear-gradient(45deg,#fff 25%,transparent 25%,transparent 75%,#fff 75%);background-size:2px 2px;background-position:0 0,1px 1px;background-color:#d4d4d4;"></div>
<div class="sb" style="left:4px;top:561px;width:16px;height:16px">
<svg style="left:0;top:0" width="16" height="16" viewBox="0 0 16 16"><path d="M8.3 3.2 L4.3 7.0 L8.3 10.8 Z" fill="#000"/></svg>
</div>
<div class="sb" style="left:1183px;top:561px;width:16px;height:16px">
<svg style="left:0;top:0" width="16" height="16" viewBox="0 0 16 16"><path d="M5.199999999999999 3.2 L9.2 7.0 L5.199999999999999 10.8 Z" fill="#000"/></svg>
</div>
<div class="sb" style="left:21px;top:561px;width:37px;height:16px">
</div>
<div style="left:1199px;top:560px;width:19px;height:17px;background:#f0f0f0;"></div>
<div style="left:4px;top:577px;width:1214px;height:19px;background:#007acc;"></div>
<div style="left:10px;top:581px;width:61px;height:13px;background:linear-gradient(#d0005e 0,#cc0066 40%,#9c0468 46%,#980070 100%);"></div>
<div class="t" style="left:14.40px;top:580px;font-size:12.35px;line-height:16px;height:16px;color:#fff;transform:scaleX(0.8460);transform-origin:0 50%;">S</div>
<div class="t" style="left:59.90px;top:580px;font-size:12.35px;line-height:16px;height:16px;color:#fff;transform:scaleX(0.7493);transform-origin:0 50%;">E</div>
<svg style="left:29px;top:582px;" width="24" height="11" viewBox="0 0 24 11"><path d="M1.2 5.5 H21.5 M16 1 L21.8 5.5 L16 10" stroke="#fff" stroke-width="1.2" fill="none"/></svg>
<div class="t" style="left:292.30px;top:581px;font-size:11.05px;line-height:16px;height:16px;color:#fff;transform:scaleX(1.0369);transform-origin:0 50%;">QuickTiming markers not set</div>
<div style="left:2px;top:596px;width:1216px;height:2px;background:#f4f4f4;"></div>
<div style="left:2px;top:130px;width:1px;height:466px;background:#6e6e6e;"></div>
<div style="left:3px;top:132px;width:1px;height:464px;background:#ececec;"></div>
<div style="left:0px;top:598px;width:1218px;height:30px;background:#293955;"></div>
<div style="left:4px;top:606px;width:194px;height:22px;background:#fff;"></div>
<div class="t" style="left:8.30px;top:609px;font-size:10.76px;line-height:16px;height:16px;color:#1a1a1a;transform:scaleX(1.0221);transform-origin:0 50%;">Data view: Transfer 235 (8 bytes)</div>
<svg style="left:183px;top:613px;" width="11" height="10" viewBox="0 0 11 10"><path d="M1.5 1.2 L9 8.7 M9 1.2 L1.5 8.7" stroke="#4a4a4a" stroke-width="1.1" fill="none"/></svg>
<div class="t" style="left:206.70px;top:610px;font-size:10.9px;line-height:16px;height:16px;color:#fff;transform:scaleX(1.0165);transform-origin:0 50%;">Traffic Summary Report</div>
<div style="left:4px;top:627px;width:194px;height:1px;background:#3a80cc;"></div>
<div style="left:198px;top:627px;width:1020px;height:1px;background:#5a6a8c;"></div>
<div style="left:4px;top:628px;width:1214px;height:28px;background:#fff;"></div>
<div style="left:198px;top:628px;width:1020px;height:1px;background:#dfe4f0;"></div>
<svg style="left:14px;top:635px;" width="16" height="16" viewBox="0 0 16 16"><path d="M0.6 0.6 H13.4 V13.4 H2 L0.6 12 Z" fill="#8a8a00" stroke="#000" stroke-width="1.2"/><rect x="2.6" y="1.2" width="8.8" height="6.6" fill="#fff"/><rect x="3.4" y="9.6" width="7.2" height="3.8" fill="#262626"/><rect x="4.6" y="10.4" width="2.6" height="3" fill="#e8e8e8"/></svg>
<div style="left:38px;top:631px;width:1px;height:23px;background:#c3c8d4;"></div>
<svg style="left:46px;top:634px;" width="44" height="18" viewBox="0 0 44 18"><path d="M15.5 1.5 V15.5 L1.5 8.5 Z" fill="#00e000" stroke="#004000" stroke-width="1.2"/><path d="M26.5 1.5 V15.5 L40.5 8.5 Z" fill="#00e000" stroke="#004000" stroke-width="1.2"/></svg>
<div style="left:96px;top:631px;width:1px;height:23px;background:#c3c8d4;"></div>
<div style="left:100px;top:631px;width:25px;height:24px;background:#fdf0d4;border:1px solid #e5c365;box-sizing:border-box;"></div>
<div style="left:125px;top:631px;width:25px;height:24px;background:#fdf0d4;border:1px solid #e5c365;box-sizing:border-box;"></div>
<div class="t" style="left:104.00px;top:630px;font-size:5.09px;line-height:16px;height:16px;color:#7c7c10;transform:scaleX(1.2509);transform-origin:0 50%;">IOIIIO</div>
<div class="t" style="left:104.00px;top:639px;font-size:11.05px;line-height:16px;height:16px;color:#000;transform:scaleX(0.8440);transform-origin:0 50%;-webkit-text-stroke:0.4px #000;">Hex</div>
<div class="t" style="left:128.60px;top:630px;font-size:5.09px;line-height:16px;height:16px;color:#7c7c10;transform:scaleX(1.2509);transform-origin:0 50%;">IOIIIO</div>
<div class="t" style="left:128.50px;top:639px;font-size:11.05px;line-height:16px;height:16px;color:#000;transform:scaleX(0.8810);transform-origin:0 50%;-webkit-text-stroke:0.4px #000;">Asci</div>
<div style="left:153.0px;top:634.6px;width:18.4px;height:5px;background:#ffffc4;"></div>
<div class="t" style="left:153.60px;top:630px;font-size:5.09px;line-height:16px;height:16px;color:#7c7c10;transform:scaleX(1.2509);transform-origin:0 50%;">IOIIIO</div>
<div class="t" style="left:154.00px;top:639px;font-size:11.05px;line-height:16px;height:16px;color:#000;transform:scaleX(0.8643);transform-origin:0 50%;-webkit-text-stroke:0.4px #000;">Dec</div>
<div style="left:178.0px;top:634.6px;width:18.4px;height:5px;background:#ffffc4;"></div>
<div class="t" style="left:178.60px;top:630px;font-size:5.09px;line-height:16px;height:16px;color:#7c7c10;transform:scaleX(1.2509);transform-origin:0 50%;">IOIIIO</div>
<div class="t" style="left:180.60px;top:639px;font-size:11.05px;line-height:16px;height:16px;color:#000;transform:scaleX(0.8987);transform-origin:0 50%;-webkit-text-stroke:0.4px #000;">Bin</div>
<div style="left:207px;top:631px;width:1px;height:23px;background:#c3c8d4;"></div>
<div style="left:211px;top:631px;width:25px;height:24px;background:#fdf0d4;border:1px solid #e5c365;box-sizing:border-box;"></div>
<div class="t" style="left:215.00px;top:632px;font-size:10.61px;line-height:16px;height:16px;color:#0a2e3c;transform:scaleX(0.8727);transform-origin:0 50%;-webkit-text-stroke:0.4px #0a2e3c;">Msb</div>
<svg style="left:214px;top:644px;" width="20" height="8" viewBox="0 0 20 8"><rect x="1.6" y="1.6" width="4.4" height="4.4" fill="#fff" stroke="#1468a8" stroke-width="1.1"/><rect x="3.2" y="3.2" width="1.2" height="1.2" fill="#1468a8"/><path d="M6.4 3.9 H18" stroke="#1468a8" stroke-width="1.3"/></svg>
<div class="t" style="left:241.00px;top:632px;font-size:10.61px;line-height:16px;height:16px;color:#0a2e3c;transform:scaleX(0.9308);transform-origin:0 50%;-webkit-text-stroke:0.4px #0a2e3c;">Lsb</div>
<svg style="left:239px;top:644px;" width="20" height="8" viewBox="0 0 20 8"><rect x="13.6" y="1.6" width="4.4" height="4.4" fill="#fff" stroke="#1468a8" stroke-width="1.1"/><rect x="15.2" y="3.2" width="1.2" height="1.2" fill="#1468a8"/><path d="M1 3.9 H13.2" stroke="#1468a8" stroke-width="1.3"/></svg>
<div style="left:265px;top:631px;width:1px;height:23px;background:#c3c8d4;"></div>
<div style="left:269px;top:631px;width:25px;height:24px;background:#fdf0d4;border:1px solid #e5c365;box-sizing:border-box;"></div>
<svg style="left:270px;top:632px;" width="50" height="22" viewBox="0 0 50 22"><g fill="#fff" stroke="#a020a0" stroke-width="1.4"><rect x="3.1" y="4" width="3.8" height="13.8"/><rect x="10.6" y="12" width="3.2" height="5.8"/><rect x="16.6" y="16" width="1.6" height="1.8"/><rect x="28" y="16" width="1.6" height="1.8"/><rect x="33.1" y="12" width="2.6" height="5.8"/><rect x="38.6" y="4" width="4.2" height="13.8"/></g></svg>
<div class="t" style="left:282.60px;top:630px;font-size:8.43px;line-height:16px;height:16px;color:#0a3020;transform:scaleX(0.9561);transform-origin:0 50%;-webkit-text-stroke:0.45px #0a3020;">B</div>
<div class="t" style="left:297.60px;top:630px;font-size:8.43px;line-height:16px;height:16px;color:#0a3020;transform:scaleX(1.0168);transform-origin:0 50%;-webkit-text-stroke:0.45px #0a3020;">L</div>
<div style="left:323px;top:631px;width:1px;height:23px;background:#c3c8d4;"></div>
<div class="t" style="left:329.40px;top:636px;font-size:10.9px;line-height:16px;height:16px;color:#1e1e1e;transform:scaleX(1.0108);transform-origin:0 50%;">Format:</div>
<div style="left:368px;top:632px;width:78px;height:22px;background:#f1f3f9;border:1px solid #8e9bbc;box-sizing:border-box;"></div>
<div style="left:370.5px;top:634.5px;width:58px;height:17px;background:#fff;"></div>
<div class="t" style="left:372.50px;top:636px;font-size:10.9px;line-height:16px;height:16px;color:#1a1a1a;transform:scaleX(0.7935);transform-origin:0 50%;">BYTEs</div>
<svg style="left:435px;top:641px;" width="8" height="5" viewBox="0 0 8 5"><path d="M0.4 0.6 H6.4 L3.4 4 Z" fill="#606060"/></svg>
<div class="t" style="left:450.60px;top:636px;font-size:10.9px;line-height:16px;height:16px;color:#1e1e1e;transform:scaleX(1.0142);transform-origin:0 50%;">Columns:</div>
<div style="left:498px;top:632px;width:48px;height:22px;background:#f1f3f9;border:1px solid #8e9bbc;box-sizing:border-box;"></div>
<div class="t" style="left:502.75px;top:634px;font-size:10.9px;line-height:16px;height:16px;color:#1a1a1a;transform:scaleX(0.9584);transform-origin:0 50%;">4</div>
<svg style="left:535px;top:641px;" width="8" height="5" viewBox="0 0 8 5"><path d="M0.4 0.6 H6.4 L3.4 4 Z" fill="#606060"/></svg>
<div style="left:552px;top:631px;width:1px;height:23px;background:#c3c8d4;"></div>
<div style="left:561px;top:634px;width:53px;height:17px;background:#f2f3f8;border:1px solid #8794ae;box-sizing:border-box;"></div>
<svg style="left:621px;top:634px;" width="18" height="18" viewBox="0 0 18 18"><path d="M5.6 16 Q0.6 11.6 3.6 7.4 Q5.8 4.6 9.4 4.6 V1.4 L15 6.4 L9.4 11.4 V8.4 Q6.4 8.4 5.4 10.6 Q4.4 13 7 15.4 Z" fill="#38e038" stroke="#003000" stroke-width="1"/></svg>
<div style="left:645px;top:631px;width:1px;height:23px;background:#c3c8d4;"></div>
<div style="left:651px;top:634px;width:56px;height:17px;background:#f2f3f8;border:1px solid #8794ae;box-sizing:border-box;"></div>
<svg style="left:713px;top:633px;will-change:transform;" width="46" height="20" viewBox="0 0 46 20"><g transform="translate(1.8,2.9) scale(1.0)"><path d="M0 12 L2.5 2.5 Q3 0.5 4.8 0.5 Q6.6 0.5 6.8 2.5 L7.2 13.5 Q3.5 16 0 12 Z" fill="#0a0a0a"/><path d="M15.5 12 L13 2.5 Q12.5 0.5 10.7 0.5 Q8.9 0.5 8.7 2.5 L8.3 13.5 Q12 16 15.5 12 Z" fill="#0a0a0a"/><rect x="6.5" y="4" width="2.5" height="4.5" fill="#0a0a0a"/><path d="M2.6 3 L1.2 11" stroke="#606060" stroke-width="1.2"/><path d="M12.9 3 L14.3 11" stroke="#606060" stroke-width="1.2"/><ellipse cx="3.7" cy="12.8" rx="2.9" ry="1.7" fill="#00e8f0"/><ellipse cx="11.8" cy="12.8" rx="2.9" ry="1.7" fill="#00e8f0"/></g><path d="M6.2 2 V10.4 L1 6.2 Z" fill="#d400d4" stroke="#fff" stroke-width="0.5"/><g transform="translate(26.6,2.9) scale(1.0)"><path d="M0 12 L2.5 2.5 Q3 0.5 4.8 0.5 Q6.6 0.5 6.8 2.5 L7.2 13.5 Q3.5 16 0 12 Z" fill="#0a0a0a"/><path d="M15.5 12 L13 2.5 Q12.5 0.5 10.7 0.5 Q8.9 0.5 8.7 2.5 L8.3 13.5 Q12 16 15.5 12 Z" fill="#0a0a0a"/><rect x="6.5" y="4" width="2.5" height="4.5" fill="#0a0a0a"/><path d="M2.6 3 L1.2 11" stroke="#606060" stroke-width="1.2"/><path d="M12.9 3 L14.3 11" stroke="#606060" stroke-width="1.2"/><ellipse cx="3.7" cy="12.8" rx="2.9" ry="1.7" fill="#00e8f0"/><ellipse cx="11.8" cy="12.8" rx="2.9" ry="1.7" fill="#00e8f0"/></g><path d="M37.8 2 V10.4 L43 6.2 Z" fill="#d400d4" stroke="#fff" stroke-width="0.5"/></svg>
<div style="left:4px;top:656px;width:1214px;height:1px;background:#9e9e9e;"></div>
<div style="left:4px;top:657px;width:1214px;height:67px;background:#f0f0f0;"></div>
<div style="left:4px;top:657px;width:1214px;height:1px;background:#c4c4c4;"></div>
<div style="left:6px;top:658px;width:100px;height:20px;background:#f0f0f0;border-right:1px solid #a0a0a0;border-bottom:1px solid #a0a0a0;box-sizing:border-box;box-shadow:inset 1px 1px 0 #fff;"></div>
<div class="t" style="left:8.50px;top:662px;font-size:12.06px;line-height:16px;height:16px;color:#141414;transform:scaleX(0.9856);transform-origin:0 50%;">Offset</div>
<div style="left:6px;top:678px;width:99px;height:46px;background:#c0c0c0;border-top:2px solid #6e6e6e;border-left:2px solid #8a8a8a;border-right:1px solid #dcdcdc;box-sizing:border-box;"></div>
<div style="left:111px;top:658px;width:313px;height:20px;background:#f0f0f0;border-right:1px solid #a0a0a0;border-bottom:1px solid #a0a0a0;box-sizing:border-box;box-shadow:inset 1px 1px 0 #fff;"></div>
<div class="t" style="left:113.10px;top:662px;font-size:12.06px;line-height:16px;height:16px;color:#141414;transform:scaleX(0.9813);transform-origin:0 50%;">Hexadecimal</div>
<div style="left:111px;top:678px;width:312px;height:46px;background:#fff;border-top:2px solid #6e6e6e;border-left:2px solid #8a8a8a;border-right:1px solid #dcdcdc;box-sizing:border-box;"></div>
<div style="left:429px;top:658px;width:786px;height:20px;background:#f0f0f0;border-right:1px solid #a0a0a0;border-bottom:1px solid #a0a0a0;box-sizing:border-box;box-shadow:inset 1px 1px 0 #fff;"></div>
<div class="t" style="left:431.25px;top:662px;font-size:12.06px;line-height:16px;height:16px;color:#141414;transform:scaleX(0.8983);transform-origin:0 50%;">ASCII*</div>
<div style="left:429px;top:678px;width:785px;height:46px;background:#fff;border-top:2px solid #6e6e6e;border-left:2px solid #8a8a8a;border-right:1px solid #dcdcdc;box-sizing:border-box;"></div>
<div style="left:17px;top:681px;width:48px;height:32px;background:#0078d7;"></div>
<div class="t" style="left:17.48px;top:681.82px;font-size:11.0px;letter-spacing:1.40px;line-height:16px;height:16px;color:#fff;font-family:'Liberation Mono',monospace;-webkit-text-stroke:0;">00000</div>
<div class="t" style="left:17.48px;top:697.82px;font-size:11.0px;letter-spacing:1.40px;line-height:16px;height:16px;color:#fff;font-family:'Liberation Mono',monospace;-webkit-text-stroke:0;">00004</div>
<div style="left:122px;top:681px;width:104px;height:16px;background:#0078d7;"></div>
<div style="left:122px;top:697px;width:88px;height:16px;background:#0078d7;"></div>
<div class="t" style="left:122.07px;top:681.82px;font-size:11.0px;letter-spacing:1.40px;line-height:16px;height:16px;color:#fff;font-family:'Liberation Mono',monospace;-webkit-text-stroke:0;">02 00 00 02</div>
<div class="t" style="left:122.07px;top:697.82px;font-size:11.0px;letter-spacing:1.40px;line-height:16px;height:16px;color:#fff;font-family:'Liberation Mono',monospace;-webkit-text-stroke:0;">F0 00 00 00</div>
<div style="left:440px;top:681px;width:72px;height:16px;background:#0078d7;"></div>
<div style="left:440px;top:697px;width:56px;height:16px;background:#0078d7;"></div>
<div class="t" style="left:441px;top:681.4px;font-size:12px;line-height:16px;height:16px;color:#fff;font-family:'Liberation Mono',monospace;letter-spacing:0.8px;">. . . .</div>
<div class="t" style="left:441px;top:697.4px;font-size:12px;line-height:16px;height:16px;color:#fff;font-family:'Liberation Mono',monospace;letter-spacing:0.8px;">. . . .</div>
<div style="left:-1px;top:601px;width:562px;height:122px;border:5px solid #00a2e8;box-sizing:border-box;"></div>
<div style="left:1218px;top:106px;width:702px;height:1px;background:#eef0f6;"></div>
<div style="left:1218px;top:107px;width:694px;height:22px;background:linear-gradient(#50648a,#3c4f76);"></div>
<div style="left:1912px;top:107px;width:6px;height:617px;background:#293955;"></div>
<div style="left:1918px;top:107px;width:2px;height:617px;background:#d6dbe9;"></div>
<div style="left:1218px;top:129px;width:8px;height:595px;background:#293955;"></div>
<div class="t" style="left:1229.30px;top:111px;font-size:11.05px;line-height:16px;height:16px;color:#fff;transform:scaleX(1.0370);transform-origin:0 50%;">Detail View of Transfer #235</div>
<svg style="left:1896px;top:114px;" width="10" height="10" viewBox="0 0 10 10"><path d="M1 1 L9 9 M9 1 L1 9" stroke="#fff" stroke-width="1.6" fill="none"/></svg>
<div style="left:1225px;top:129px;width:686px;height:595px;background:#0e5a9e;"></div>
<div style="left:1226px;top:130px;width:684px;height:594px;background:#dde2f0;"></div>
<div style="left:1228px;top:132px;width:681px;height:592px;background:#fff;"></div>
<svg style="left:1232px;top:133px" width="3" height="24" viewBox="0 0 3 24"><rect x="0.6" y="1" width="1.5" height="1.6" fill="#bcbcbc"/><rect x="0.6" y="5" width="1.5" height="1.6" fill="#bcbcbc"/><rect x="0.6" y="9" width="1.5" height="1.6" fill="#bcbcbc"/><rect x="0.6" y="13" width="1.5" height="1.6" fill="#bcbcbc"/><rect x="0.6" y="17" width="1.5" height="1.6" fill="#bcbcbc"/><rect x="0.6" y="21" width="1.5" height="1.6" fill="#bcbcbc"/></svg>
<svg style="left:1244px;top:139px;" width="46" height="14" viewBox="0 0 46 14"><path d="M18 1.2 V12.2 Q11 8 2 6.6 Q11 5.4 18 1.2 Z" fill="#00e800" stroke="#000" stroke-width="1"/><path d="M28.5 1.2 V12.2 Q35 8 44 6.6 Q35 5.4 28.5 1.2 Z" fill="#00e800" stroke="#000" stroke-width="1"/></svg>
<div style="left:1228px;top:158px;width:680px;height:2px;background:linear-gradient(#bdbdbd,#6e6e6e);"></div>
<div style="left:1228px;top:160px;width:2px;height:564px;background:linear-gradient(90deg,#9a9a9a,#6a6a6a);"></div>
<div style="left:1888px;top:161px;width:20px;height:563px;background:#f0f0f0;"></div>
<svg style="left:1891px;top:166px;" width="13" height="9" viewBox="0 0 13 9"><path d="M2 6.6 L5.6 2.6 L9.2 6.6" stroke="#a8a8a8" stroke-width="1.8" fill="none"/></svg>
<div class="dt" style="left:1232px;top:167px;">
<div class="dr" style="top:0px"><div class="dl" style="background:#40e47c;color:#000"><span>Transfer</span></div><div class="dv" style="background:#40e47c;color:#000"><span>235</span></div></div>
<div class="dr" style="top:16px"><div class="dl" style="background:#808040;color:#fff"><span>F</span></div><div class="dv" style="background:#fff;color:#000"><span>S</span></div></div>
<div class="dr" style="top:32px"><div class="dl" style="background:#400040;color:#fff"><span>Interrupt</span></div><div class="dv" style="background:#fff;color:#000"><span>IN</span></div></div>
<div class="dr" style="top:48px"><div class="dl" style="background:#000040;color:#fff"><span>ADDR</span></div><div class="dv" style="background:#fff;color:#000"><span>30</span></div></div>
<div class="dr" style="top:64px"><div class="dl" style="background:#00ff80;color:#000"><span>ENDP</span></div><div class="dv" style="background:#fff;color:#000"><span>2</span></div></div>
<div class="dr" style="top:80px"><div class="dl" style="background:#7a5944;color:#fff"><span>Report ID</span></div><div class="dv" style="background:#fff;color:#000"><span>0x02</span></div></div>
<div class="dr" style="top:96px"><div class="dl" style="background:#7a5944;color:#fff"><svg style="left:2px;top:0.4px" width="5" height="7" viewBox="0 0 5 7"><path d="M0 0 L3.6 2.9 L0 5.8 Z" fill="#fff"/></svg><span class=u>Usage Page</span></div><div class="dv" style="background:#7a5944;color:#fff"><span>Button (0x09)</span></div></div>
<div class="dr" style="top:112px"><div class="dl" style="background:#d9a07a;color:#fff"><span>Button 1</span></div><div class="dv" style="background:#fff;color:#000"><span>0</span></div></div>
<div class="dr" style="top:128px"><div class="dl" style="background:#d9a07a;color:#fff"><span>Button 2</span></div><div class="dv" style="background:#fff;color:#000"><span>0</span></div></div>
<div class="dr" style="top:144px"><div class="dl" style="background:#d9a07a;color:#fff"><span>Button 3</span></div><div class="dv" style="background:#fff;color:#000"><span>0</span></div></div>
<div class="dr" style="top:160px"><div class="dl" style="background:#d9a07a;color:#fff"><span>Button 4</span></div><div class="dv" style="background:#fff;color:#000"><span>0</span></div></div>
<div class="dr" style="top:176px"><div class="dl" style="background:#d9a07a;color:#fff"><span>Button 5</span></div><div class="dv" style="background:#fff;color:#000"><span>0</span></div></div>
<div class="dr" style="top:192px"><div class="dl" style="background:#d9a07a;color:#fff"><span>Button 6</span></div><div class="dv" style="background:#fff;color:#000"><span>0</span></div></div>
<div class="dr" style="top:208px"><div class="dl" style="background:#d9a07a;color:#fff"><span>Button 7</span></div><div class="dv" style="background:#fff;color:#000"><span>0</span></div></div>
<div class="dr" style="top:224px"><div class="dl" style="background:#d9a07a;color:#fff"><span>Button 8</span></div><div class="dv" style="background:#fff;color:#000"><span>0</span></div></div>
<div class="dr" style="top:240px"><div class="dl" style="background:#d9a07a;color:#fff"><span>Button 9</span></div><div class="dv" style="background:#fff;color:#000"><span>0</span></div></div>
<div class="dr" style="top:256px"><div class="dl" style="background:#d9a07a;color:#fff"><span>Button 10</span></div><div class="dv" style="background:#fff;color:#000"><span>0</span></div></div>
<div class="dr" style="top:272px"><div class="dl" style="background:#d9a07a;color:#fff"><span>Button 11</span></div><div class="dv" style="background:#fff;color:#000"><span>0</span></div></div>
<div class="dr" style="top:288px"><div class="dl" style="background:#d9a07a;color:#fff"><span>Button 12</span></div><div class="dv" style="background:#fff;color:#000"><span>0</span></div></div>
<div class="dr" style="top:304px"><div class="dl" style="background:#d9a07a;color:#fff"><span>Button 13</span></div><div class="dv" style="background:#fff;color:#000"><span>0</span></div></div>
<div class="dr" style="top:320px"><div class="dl" style="background:#d9a07a;color:#fff"><span>Button 14</span></div><div class="dv" style="background:#fff;color:#000"><span>0</span></div></div>
<div class="dr" style="top:336px"><div class="dl" style="background:#d9a07a;color:#fff"><span>Button 15</span></div><div class="dv" style="background:#fff;color:#000"><span>0</span></div></div>
<div class="dr" style="top:352px"><div class="dl" style="background:#d9a07a;color:#fff"><span>Button 16</span></div><div class="dv" style="background:#fff;color:#000"><span>0</span></div></div>
<div class="dr" style="top:368px"><div class="dl" style="background:#7a5944;color:#fff"><svg style="left:2px;top:0.4px" width="5" height="7" viewBox="0 0 5 7"><path d="M0 0 L3.6 2.9 L0 5.8 Z" fill="#fff"/></svg><span class=u>Usage Page</span></div><div class="dv" style="background:#7a5944;color:#fff"><span>Generic Desktop Controls (0x01)</span></div></div>
<div class="dr" style="top:384px"><div class="dl" style="background:#d9a07a;color:#fff"><span>X</span></div><div class="dv" style="background:#fff;color:#000"><span>0x002</span></div></div>
<div class="dr" style="top:400px"><div class="dl" style="background:#d9a07a;color:#fff"><span>Y</span></div><div class="dv" style="background:#fff;color:#000"><span>0x00F</span></div></div>
<div class="dr" style="top:416px"><div class="dl" style="background:#d9a07a;color:#fff"><span>Wheel</span></div><div class="dv" style="background:#fff;color:#000"><span>0x00</span></div></div>
<div class="dr" style="top:432px"><div class="dl" style="background:#7a5944;color:#fff"><svg style="left:2px;top:0.4px" width="5" height="7" viewBox="0 0 5 7"><path d="M0 0 L3.6 2.9 L0 5.8 Z" fill="#fff"/></svg><span class=u>Usage Page</span></div><div class="dv" style="background:#7a5944;color:#fff"><span>Consumer (0x0C)</span></div></div>
<div class="dr" style="top:448px"><div class="dl" style="background:#d9a07a;color:#fff"><span>AC Pan</span></div><div class="dv" style="background:#fff;color:#000"><span>0x00</span></div></div>
<div class="dr" style="top:464px"><div class="dl" style="background:#800000;color:#fff"><span>Bytes Transferred</span></div><div class="dv" style="background:#fff;color:#000"><span>8</span></div></div>
<div class="dr" style="top:480px"><div class="dl" style="background:#5a46e6;color:#fff"><span>Time</span></div><div class="dv" style="background:#fff;color:#000"><span> 8.000 ms</span></div></div>
<div class="dr" style="top:496px"><div class="dl" style="background:#0000ff;color:#fff"><span>Time Stamp</span></div><div class="dv" style="background:#fff;color:#000"><span>18 . 537 949 532</span></div></div>
</div>
<div style="left:1218px;top:108px;width:662px;height:581px;border:5px solid #fff200;box-sizing:border-box;"></div>
<div class="wm" style="left:1786px;top:626px;">看雪</div>
<svg style="left:1706px;top:620px;filter:drop-shadow(1px 2px 2px rgba(0,0,0,.2));" width="74" height="88" viewBox="0 0 74 88"><g stroke="#fff" stroke-opacity="0.42" stroke-width="2.8" stroke-linecap="round" fill="none"><path d="M36.5 8 V78 M6 25.5 L67 60.5 M67 25.5 L6 60.5"/><path d="M27 15 L36.5 24 L46 15 M27 71 L36.5 62 L46 71"/><path d="M8 38 L19 33 L17 21 M65 38 L54 33 L56 21 M8 48 L19 53 L17 65 M65 48 L54 53 L56 65"/></g></svg>
<div style="left:2px;top:133px;width:1190px;height:47px;border:5px solid #ed1c24;box-sizing:border-box;"></div>
</body></html>
